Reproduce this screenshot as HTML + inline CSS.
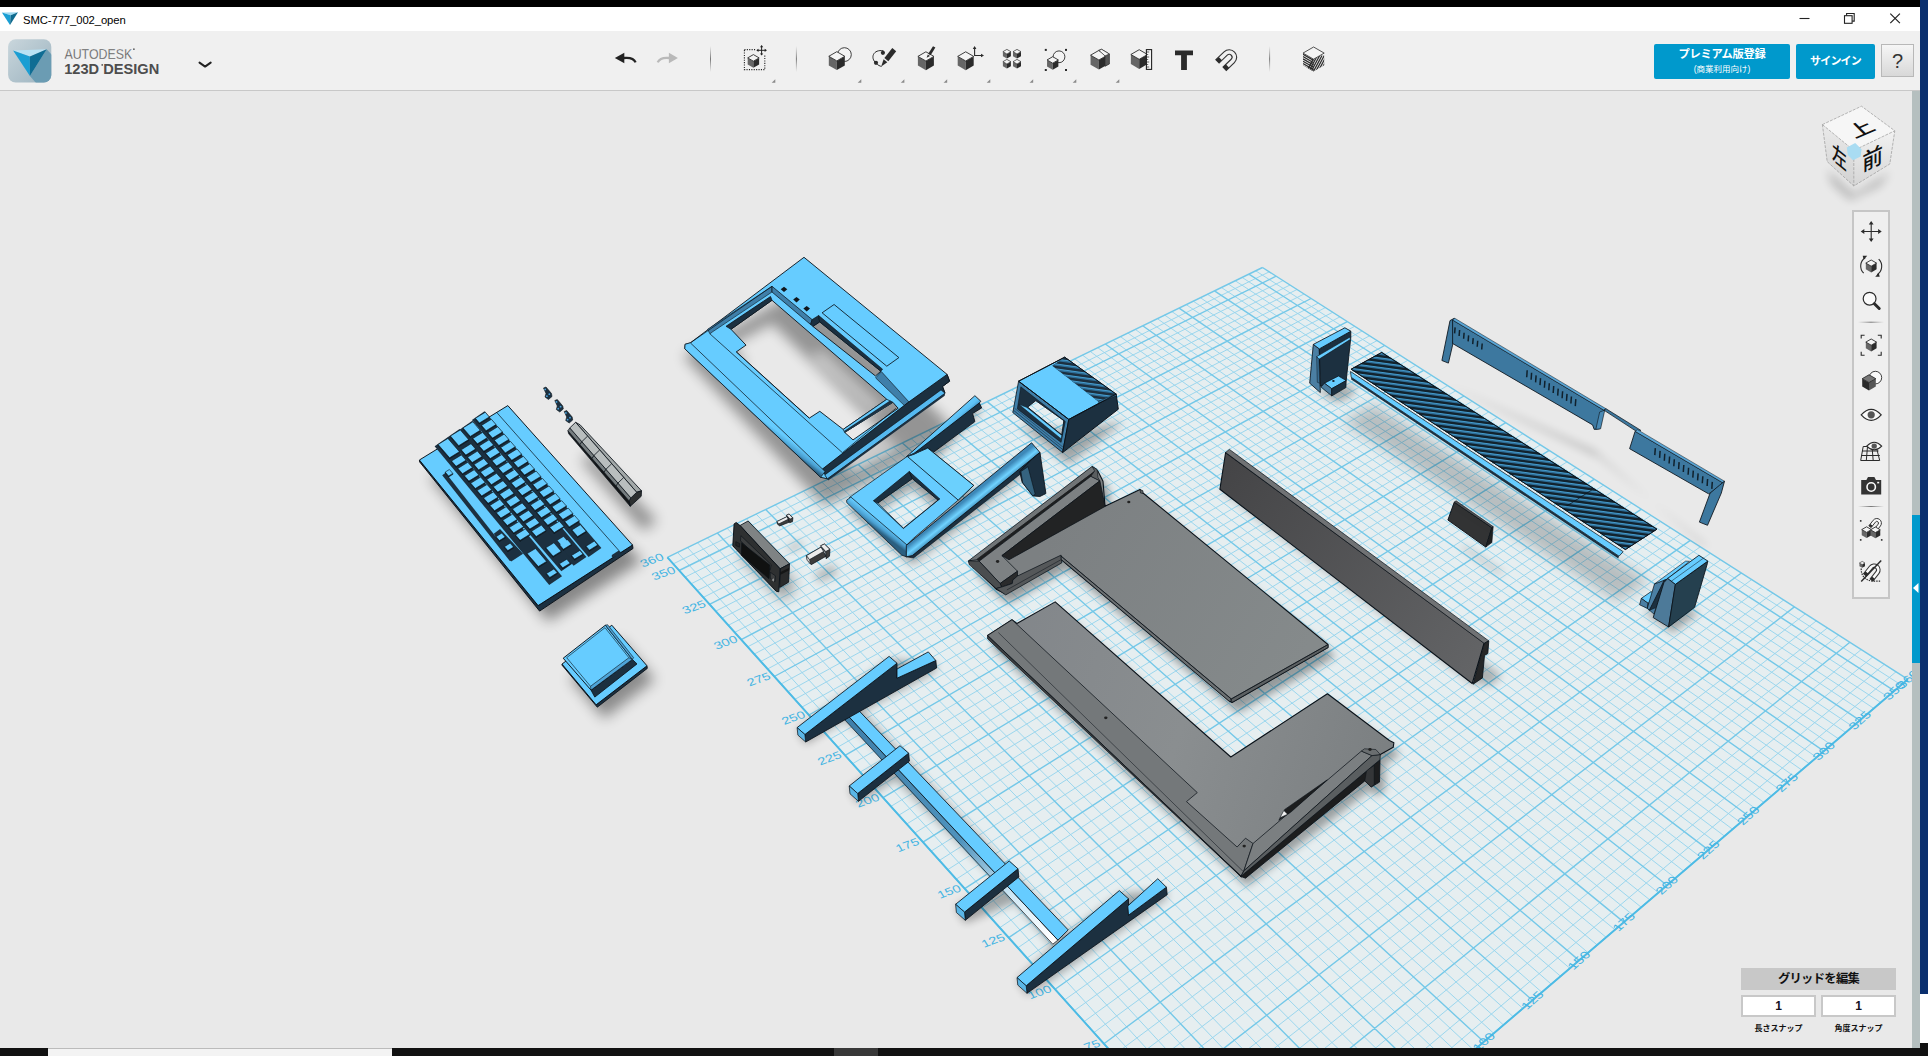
<!DOCTYPE html>
<html><head><meta charset="utf-8"><title>SMC-777_002_open</title>
<style>
html,body{margin:0;padding:0;}
body{width:1928px;height:1056px;overflow:hidden;position:relative;background:#e9e9e9;font-family:"Liberation Sans","Noto Sans CJK JP",sans-serif;}
.abs{position:absolute;}
#topblack{left:0;top:0;width:1920px;height:7.5px;background:#000;}
#titlebar{left:0;top:7px;width:1920px;height:24px;background:#fff;}
#title{left:23px;top:12.6px;font-size:11.3px;color:#000;line-height:14px;letter-spacing:-0.1px;}
#toolbar{left:0;top:31px;width:1920px;height:59px;background:#f0f0f0;border-bottom:1px solid #c8c8c8;}
#viewport{left:0;top:91px;width:1912px;height:957px;background:#e9e9e9;overflow:hidden;}
#rightblue{left:1920px;top:0;width:8px;height:994px;background:#0a2f6e;}
#rightwhite{left:1920px;top:994px;width:8px;height:49px;background:#fff;}
#vscroll{left:1912px;top:91px;width:8px;height:957px;background:#b5bfbf;}
#vthumb{left:1912px;top:515px;width:8px;height:148px;background:#0099cc;}
#bottom{left:0;top:1048px;width:1928px;height:8px;background:#111;}
#bottom2{left:1920px;top:1043px;width:8px;height:6px;background:#111;}
#bottombox{left:48px;top:1048px;width:344px;height:8px;background:#f3f3f3;border-top:1px solid #bbb;box-sizing:border-box;}
#bottomtab{left:834px;top:1048px;width:44px;height:8px;background:#383838;}
.btn{background:#0099cc;color:#fff;text-align:center;border-radius:2px;font-weight:bold;}
#prem{left:1654px;top:44px;width:136px;height:35px;}
#prem .l1{position:absolute;left:0;width:136px;top:3px;font-size:11.3px;line-height:14px;letter-spacing:-0.3px;}
#prem .l2{position:absolute;left:0;width:136px;top:19px;font-size:8.5px;line-height:12px;font-weight:normal;}
#signin{left:1796px;top:44px;width:79px;height:35px;font-size:11px;line-height:35px;letter-spacing:-0.8px;}
#help{left:1881px;top:44px;width:33px;height:33px;border:1px solid #b8b8b8;background:linear-gradient(#f6f6f6,#d8d8d8);font-size:20px;line-height:33px;text-align:center;color:#333;box-sizing:border-box;}
#navbar{left:1852px;top:210px;width:38px;height:389px;box-sizing:border-box;border:2.5px solid #c6c6c6;background:#efefef;}
#gridedit{left:1741px;top:968px;width:155px;height:22px;background:#c8c8c8;letter-spacing:-0.7px;font-size:12.3px;font-weight:bold;text-align:center;line-height:22px;color:#111;}
.snap{top:995px;width:75px;height:22px;box-sizing:border-box;border:2px solid #c8c8c8;background:#fff;text-align:center;font-size:12px;line-height:18px;color:#112;font-weight:bold;}
.snaplab{top:1024px;width:75px;font-size:8px;font-weight:bold;text-align:center;line-height:10px;color:#111;}
</style></head><body>
<div class="abs" id="viewport"></div>
<svg class="abs" style="left:0;top:0" width="1928" height="1056" viewBox="0 0 1928 1056">
<defs>
<filter id="sh" x="-30%" y="-30%" width="160%" height="160%"><feGaussianBlur stdDeviation="7"/></filter>
<filter id="sh2" x="-30%" y="-30%" width="160%" height="160%"><feGaussianBlur stdDeviation="4"/></filter>
<filter id="sh3" x="-30%" y="-30%" width="160%" height="160%"><feGaussianBlur stdDeviation="5"/></filter>
<filter id="sh4" x="-30%" y="-30%" width="160%" height="160%"><feGaussianBlur stdDeviation="6.5"/></filter>
<clipPath id="vp"><rect x="0" y="91" width="1912" height="957"/></clipPath>
<linearGradient id="gA" gradientUnits="userSpaceOnUse" x1="1060" y1="520" x2="1300" y2="660"><stop offset="0" stop-color="#7c8082"/><stop offset="1" stop-color="#858a8b"/></linearGradient>
<linearGradient id="gB" gradientUnits="userSpaceOnUse" x1="1000" y1="640" x2="1380" y2="760"><stop offset="0" stop-color="#82868a"/><stop offset="0.5" stop-color="#8a8e90"/><stop offset="1" stop-color="#7c8082"/></linearGradient>
<linearGradient id="gBP" gradientUnits="userSpaceOnUse" x1="1225" y1="470" x2="1480" y2="660"><stop offset="0" stop-color="#454547"/><stop offset="1" stop-color="#636466"/></linearGradient>
<linearGradient id="gOpen" gradientUnits="userSpaceOnUse" x1="760" y1="400" x2="830" y2="345"><stop offset="0" stop-color="#e9e9e9"/><stop offset="0.55" stop-color="#b5b5b5"/><stop offset="1" stop-color="#9c9c9c"/></linearGradient>
<linearGradient id="gRound" gradientUnits="userSpaceOnUse" x1="750" y1="410" x2="744" y2="418"><stop offset="0" stop-color="#66ccff"/><stop offset="0.6" stop-color="#4a9fd0"/><stop offset="1" stop-color="#2b5f80"/></linearGradient>
<linearGradient id="gRound2" gradientUnits="userSpaceOnUse" x1="880" y1="520" x2="874" y2="528"><stop offset="0" stop-color="#66ccff"/><stop offset="0.6" stop-color="#4a9fd0"/><stop offset="1" stop-color="#2b5f80"/></linearGradient>
<linearGradient id="gRail" gradientUnits="userSpaceOnUse" x1="968" y1="498" x2="976" y2="508"><stop offset="0" stop-color="#3d88b8"/><stop offset="0.45" stop-color="#6fd2ff"/><stop offset="1" stop-color="#2f74a0"/></linearGradient>
<linearGradient id="gArm" gradientUnits="userSpaceOnUse" x1="940" y1="425" x2="946" y2="432"><stop offset="0" stop-color="#66ccff"/><stop offset="0.6" stop-color="#5cc0f4"/><stop offset="1" stop-color="#3f94c6"/></linearGradient>
<linearGradient id="gBarSide" gradientUnits="userSpaceOnUse" x1="850" y1="720" x2="1050" y2="940"><stop offset="0" stop-color="#3f7fa9"/><stop offset="0.55" stop-color="#4f93bd"/><stop offset="0.8" stop-color="#cfe8f5"/><stop offset="1" stop-color="#ffffff"/></linearGradient>
</defs>
<g clip-path="url(#vp)">
<polygon points="1267.9,1226.4 667.4,557.4 1262.5,267.5 1907.9,679.3" fill="#e6eef0" />
<path d="M1256 1213.2L1896.1 671.7M1279.6 1216.3L677.5 552.4M1244.3 1200.2L1884.4 664.3M1291.2 1206.4L687.5 547.5M1232.8 1187.3L1872.8 656.9M1302.7 1196.6L697.5 542.7M1221.3 1174.6L1861.3 649.5M1314.1 1186.8L707.4 537.8M1198.9 1149.5L1838.6 635.1M1336.6 1167.6L727.1 528.3M1187.9 1137.2L1827.4 627.9M1347.7 1158.1L736.8 523.5M1177 1125.1L1816.4 620.8M1358.7 1148.7L746.5 518.8M1166.2 1113.1L1805.4 613.8M1369.7 1139.3L756.1 514.1M1145 1089.4L1783.6 600M1391.2 1120.9L775.2 504.8M1134.5 1077.8L1772.9 593.1M1401.9 1111.8L784.6 500.2M1124.2 1066.3L1762.3 586.3M1412.4 1102.8L794 495.7M1114 1055L1751.7 579.6M1422.9 1093.9L803.3 491.1M1093.9 1032.6L1730.9 566.3M1443.5 1076.2L821.8 482.1M1084.1 1021.6L1720.6 559.8M1453.7 1067.5L831 477.6M1074.3 1010.7L1710.4 553.3M1463.9 1058.8L840.1 473.2M1064.6 999.9L1700.3 546.8M1473.9 1050.3L849.2 468.8M1045.6 978.8L1680.4 534.1M1493.7 1033.3L867.1 460.1M1036.2 968.3L1670.5 527.8M1503.5 1025L876 455.7M1027 958L1660.7 521.5M1513.2 1016.7L884.9 451.4M1017.8 947.8L1651 515.4M1522.8 1008.4L893.6 447.1M999.7 927.7L1631.8 503.1M1541.8 992.2L911.1 438.6M990.9 917.8L1622.4 497.1M1551.2 984.1L919.7 434.4M982.1 908L1613 491.1M1560.5 976.2L928.3 430.3M973.4 898.3L1603.6 485.1M1569.8 968.3L936.8 426.1M956.2 879.2L1585.2 473.4M1588.1 952.7L953.8 417.9M947.7 869.7L1576.1 467.6M1597.1 944.9L962.2 413.8M939.4 860.4L1567.1 461.8M1606.1 937.3L970.5 409.7M931.1 851.2L1558.1 456.1M1614.9 929.7L978.8 405.7M914.8 833L1540.4 444.8M1632.5 914.7L995.3 397.6M906.7 824L1531.6 439.2M1641.2 907.2L1003.4 393.7M898.8 815.2L1522.9 433.7M1649.8 899.9L1011.5 389.7M890.9 806.4L1514.3 428.2M1658.4 892.6L1019.6 385.8M875.3 789.1L1497.3 417.3M1675.3 878.1L1035.6 378M867.7 780.5L1488.8 411.9M1683.6 871L1043.5 374.1M860.1 772.1L1480.5 406.6M1691.9 863.9L1051.4 370.3M852.6 763.7L1472.2 401.3M1700.2 856.8L1059.2 366.5M837.7 747.2L1455.7 390.8M1716.4 842.9L1074.8 358.9M830.4 739L1447.6 385.6M1724.5 836.1L1082.5 355.1M823.2 730.9L1439.6 380.5M1732.5 829.2L1090.2 351.4M816 722.9L1431.5 375.4M1740.4 822.4L1097.8 347.7M801.8 707.2L1415.7 365.3M1756.1 809L1113 340.3M794.8 699.4L1407.9 360.3M1763.8 802.4L1120.5 336.7M787.9 691.7L1400.1 355.3M1771.5 795.8L1127.9 333M781.1 684L1392.4 350.4M1779.2 789.3L1135.3 329.4M767.5 669L1377.1 340.6M1794.3 776.4L1150.1 322.2M760.8 661.5L1369.6 335.8M1801.8 770L1157.4 318.7M754.2 654.1L1362.1 331M1809.2 763.6L1164.7 315.1M747.7 646.8L1354.7 326.3M1816.6 757.3L1171.9 311.6M734.7 632.4L1339.9 316.9M1831.2 744.8L1186.2 304.6M728.3 625.3L1332.6 312.3M1838.4 738.7L1193.3 301.2M722 618.2L1325.4 307.6M1845.6 732.5L1200.4 297.7M715.7 611.2L1318.2 303.1M1852.7 726.5L1207.5 294.3M703.3 597.4L1304 294M1866.8 714.4L1221.4 287.5M697.2 590.6L1297 289.5M1873.8 708.4L1228.4 284.1M691.1 583.8L1290 285M1880.7 702.5L1235.3 280.8M685.1 577.1L1283 280.6M1887.6 696.7L1242.1 277.4M673.2 563.9L1269.3 271.8M1901.2 685L1255.7 270.8" stroke="#97d5ed" stroke-width="0.95" fill="none"/>
<path d="M1267.9 1226.4L1907.9 679.3M1267.9 1226.4L667.4 557.4M1210.1 1162L1849.9 642.3M1325.4 1177.2L717.3 533M1155.5 1101.2L1794.4 606.9M1380.5 1130.1L765.7 509.5M1103.9 1043.7L1741.3 573M1433.3 1085L812.6 486.6M1055.1 989.3L1690.3 540.4M1483.8 1041.8L858.2 464.4M1008.7 937.7L1641.4 509.2M1532.4 1000.3L902.4 442.9M964.7 888.7L1594.4 479.2M1579 960.4L945.3 422M922.9 842.1L1549.2 450.4M1623.8 922.1L987.1 401.6M883.1 797.7L1505.8 422.7M1666.9 885.3L1027.6 381.9M845.1 755.4L1463.9 396M1708.3 849.9L1067 362.7M808.9 715L1423.6 370.3M1748.3 815.7L1105.4 344M774.3 676.5L1384.7 345.5M1786.8 782.8L1142.7 325.8M741.2 639.6L1347.3 321.6M1823.9 751.1L1179.1 308.1M709.5 604.3L1311.1 298.5M1859.8 720.4L1214.5 290.9M679.1 570.5L1276.1 276.2M1894.4 690.8L1248.9 274.1M667.4 557.4L1262.5 267.5M1907.9 679.3L1262.5 267.5" stroke="#74c8e8" stroke-width="1.4" fill="none"/>
<path d="M667.4 557.4L1267.9 1226.4L1907.9 679.3" stroke="#4dbbe5" stroke-width="1.9" fill="none"/>
<text transform="matrix(0.94,-0.34,0.40,0.66,664.9,559.4)" x="0" y="0" text-anchor="end" font-size="14.2" fill="#45b5e3" font-family="Liberation Sans,sans-serif">360</text>
<text transform="matrix(0.94,-0.34,0.40,0.66,676.6,572.5)" x="0" y="0" text-anchor="end" font-size="14.2" fill="#45b5e3" font-family="Liberation Sans,sans-serif">350</text>
<text transform="matrix(0.94,-0.34,0.40,0.66,707,606.3)" x="0" y="0" text-anchor="end" font-size="14.2" fill="#45b5e3" font-family="Liberation Sans,sans-serif">325</text>
<text transform="matrix(0.94,-0.34,0.40,0.66,738.7,641.6)" x="0" y="0" text-anchor="end" font-size="14.2" fill="#45b5e3" font-family="Liberation Sans,sans-serif">300</text>
<text transform="matrix(0.94,-0.34,0.40,0.66,771.8,678.5)" x="0" y="0" text-anchor="end" font-size="14.2" fill="#45b5e3" font-family="Liberation Sans,sans-serif">275</text>
<text transform="matrix(0.94,-0.34,0.40,0.66,806.4,717)" x="0" y="0" text-anchor="end" font-size="14.2" fill="#45b5e3" font-family="Liberation Sans,sans-serif">250</text>
<text transform="matrix(0.94,-0.34,0.40,0.66,842.6,757.4)" x="0" y="0" text-anchor="end" font-size="14.2" fill="#45b5e3" font-family="Liberation Sans,sans-serif">225</text>
<text transform="matrix(0.94,-0.34,0.40,0.66,880.6,799.7)" x="0" y="0" text-anchor="end" font-size="14.2" fill="#45b5e3" font-family="Liberation Sans,sans-serif">200</text>
<text transform="matrix(0.94,-0.34,0.40,0.66,920.4,844.1)" x="0" y="0" text-anchor="end" font-size="14.2" fill="#45b5e3" font-family="Liberation Sans,sans-serif">175</text>
<text transform="matrix(0.94,-0.34,0.40,0.66,962.2,890.7)" x="0" y="0" text-anchor="end" font-size="14.2" fill="#45b5e3" font-family="Liberation Sans,sans-serif">150</text>
<text transform="matrix(0.94,-0.34,0.40,0.66,1006.2,939.7)" x="0" y="0" text-anchor="end" font-size="14.2" fill="#45b5e3" font-family="Liberation Sans,sans-serif">125</text>
<text transform="matrix(0.94,-0.34,0.40,0.66,1052.6,991.3)" x="0" y="0" text-anchor="end" font-size="14.2" fill="#45b5e3" font-family="Liberation Sans,sans-serif">100</text>
<text transform="matrix(0.94,-0.34,0.40,0.66,1101.4,1045.7)" x="0" y="0" text-anchor="end" font-size="14.2" fill="#45b5e3" font-family="Liberation Sans,sans-serif">75</text>
<text transform="matrix(0.75,-0.66,0.72,0.455,1907.9,679.3)" x="0" y="4.8" text-anchor="middle" font-size="14.2" fill="#45b5e3" font-family="Liberation Sans,sans-serif">360</text>
<text transform="matrix(0.75,-0.66,0.72,0.455,1894.4,690.8)" x="0" y="4.8" text-anchor="middle" font-size="14.2" fill="#45b5e3" font-family="Liberation Sans,sans-serif">350</text>
<text transform="matrix(0.75,-0.66,0.72,0.455,1859.8,720.4)" x="0" y="4.8" text-anchor="middle" font-size="14.2" fill="#45b5e3" font-family="Liberation Sans,sans-serif">325</text>
<text transform="matrix(0.75,-0.66,0.72,0.455,1823.9,751.1)" x="0" y="4.8" text-anchor="middle" font-size="14.2" fill="#45b5e3" font-family="Liberation Sans,sans-serif">300</text>
<text transform="matrix(0.75,-0.66,0.72,0.455,1786.8,782.8)" x="0" y="4.8" text-anchor="middle" font-size="14.2" fill="#45b5e3" font-family="Liberation Sans,sans-serif">275</text>
<text transform="matrix(0.75,-0.66,0.72,0.455,1748.3,815.7)" x="0" y="4.8" text-anchor="middle" font-size="14.2" fill="#45b5e3" font-family="Liberation Sans,sans-serif">250</text>
<text transform="matrix(0.75,-0.66,0.72,0.455,1708.3,849.9)" x="0" y="4.8" text-anchor="middle" font-size="14.2" fill="#45b5e3" font-family="Liberation Sans,sans-serif">225</text>
<text transform="matrix(0.75,-0.66,0.72,0.455,1666.9,885.3)" x="0" y="4.8" text-anchor="middle" font-size="14.2" fill="#45b5e3" font-family="Liberation Sans,sans-serif">200</text>
<text transform="matrix(0.75,-0.66,0.72,0.455,1623.8,922.1)" x="0" y="4.8" text-anchor="middle" font-size="14.2" fill="#45b5e3" font-family="Liberation Sans,sans-serif">175</text>
<text transform="matrix(0.75,-0.66,0.72,0.455,1579,960.4)" x="0" y="4.8" text-anchor="middle" font-size="14.2" fill="#45b5e3" font-family="Liberation Sans,sans-serif">150</text>
<text transform="matrix(0.75,-0.66,0.72,0.455,1532.4,1000.3)" x="0" y="4.8" text-anchor="middle" font-size="14.2" fill="#45b5e3" font-family="Liberation Sans,sans-serif">125</text>
<text transform="matrix(0.75,-0.66,0.72,0.455,1483.8,1041.8)" x="0" y="4.8" text-anchor="middle" font-size="14.2" fill="#45b5e3" font-family="Liberation Sans,sans-serif">100</text>
<polygon points="974.8,571.8 1098.5,477 1104,481.2 1109,491.2 1111,516.2 1146,499.5 1149,503 1334,654.5 1334,657.5 1238,712.5 1235.5,711 1067.2,569.5 1009.8,603 1002.2,599.2" fill="#000" opacity="0.35" filter="url(#sh2)"/>
<polygon points="968.8,561.8 1092.5,467 1098,471.2 1103,481.2 1105,506.2 1140,489.5 1143,493 1328,644.5 1328,647.5 1232,702.5 1229.5,701 1061.2,559.5 1003.8,593 996.2,589.2" fill="url(#gA)" stroke="#0a1118" stroke-width="1.08" stroke-linejoin="round" />
<polygon points="968.5,560.8 1092.1,466.4 1097.1,469.6 976.3,559.8" fill="#707476" stroke="#0a1118" stroke-width="0.72" stroke-linejoin="round" />
<polygon points="976.3,559.8 1094.6,470.9 1091.4,476.3 979.2,561.2" fill="#1e1f20" />
<polygon points="979.2,561.2 1090.9,476.3 1099.9,480.8 1001.9,555.6 1017.5,571.2 1000.1,583.5" fill="#7d8183" stroke="#0a1118" stroke-width="0.72" stroke-linejoin="round" />
<polygon points="1001.9,555.6 1099.9,480.8 1105.1,506.4 1009,559.8" fill="#222324" stroke="#0a1118" stroke-width="0.72" stroke-linejoin="round" />
<polygon points="1092.1,466.4 1097.1,469.6 1098,477.7 1099.9,480.8 1090.9,476.3 1094.6,470.9" fill="#5a5e60" stroke="#0a1118" stroke-width="0.6" stroke-linejoin="round" />
<polygon points="1000.1,583.5 1017.5,571.2 1017.5,576 1012.8,580 1012.3,583.5 1001.5,587.1" fill="#2a2b2c" stroke="#0a1118" stroke-width="0.72" stroke-linejoin="round" />
<polygon points="968.5,560.8 979.2,561.2 1000.1,583.5 1001.5,587.1 996.2,588.5 969.2,564.6" fill="#4a4d4f" stroke="#0a1118" stroke-width="0.72" stroke-linejoin="round" />
<ellipse cx="997.6" cy="561.5" rx="1.7" ry="1.4" fill="#222"/>
<polygon points="1017.5,576 1061.1,555.1 1061.7,562.9 1005.7,594.9 996.2,588.5 1001.5,587.1 1012.3,583.5 1012.8,580" fill="#55585a" stroke="#0a1118" stroke-width="0.72" stroke-linejoin="round" />
<polyline points="1006.9,589.9 1061.5,559.4" fill="none" stroke="#0a1118" stroke-width="0.5" stroke-linejoin="round" />
<polygon points="1061.2,556.2 1231.2,698.8 1229.5,701.5 1061.2,559.5" fill="#6c7072" stroke="#0a1118" stroke-width="0.72" stroke-linejoin="round" />
<polygon points="1328,644.5 1328,647.5 1232,702.5 1231.2,699" fill="#5c6062" stroke="#0a1118" stroke-width="0.72" stroke-linejoin="round" />
<polyline points="1061.2,556.2 1231.2,699 1328,644.5" fill="none" stroke="#0a1118" stroke-width="0.6" stroke-linejoin="round" />
<ellipse cx="1128.8" cy="502" rx="1.6" ry="1.3" fill="#222"/>
<polygon points="1140,489.5 1143,490.8 1143,493.5 1140.5,493" fill="#5c6062" stroke="#0a1118" stroke-width="0.6" stroke-linejoin="round" />
<polygon points="1219.9,489.3 1472.2,683.5 1491.4,685.6 1501.6,675.4 1251.1,481.1" fill="#000" opacity="0.25" filter="url(#sh2)"/>
<polygon points="1225.6,452.5 1219.9,489.3 1472.2,683.5 1484.2,642.7" fill="url(#gBP)" stroke="#0a1118" stroke-width="1.08" stroke-linejoin="round" />
<polygon points="1225.6,452.5 1229.4,449.4 1488.8,640.9 1484.2,643.4" fill="#707274" stroke="#0a1118" stroke-width="0.72" stroke-linejoin="round" />
<polygon points="1484.2,643.4 1488.8,640.9 1487.8,653.6 1484.5,655.4 1482.4,677.9 1473,684.3" fill="#262728" stroke="#0a1118" stroke-width="0.84" stroke-linejoin="round" />
<polygon points="1457.9,545 1495.8,572.1 1506.5,575.1 1468.1,548.3" fill="#000" opacity="0.25" filter="url(#sh2)"/>
<polygon points="1454.3,502.1 1447.9,520 1485.8,547.1 1491.9,527.6" fill="#323334" stroke="#0a1118" stroke-width="0.96" stroke-linejoin="round" />
<polygon points="1454.3,502.1 1456.1,500.8 1493.2,526.6 1491.9,527.6" fill="#555759" stroke="#0a1118" stroke-width="0.6" stroke-linejoin="round" />
<polygon points="1491.9,527.6 1493.2,526.6 1491.9,542.5 1485.8,547.1" fill="#1f2021" stroke="#0a1118" stroke-width="0.6" stroke-linejoin="round" />
<polygon points="992.6,644.5 1017,628.8 1021.9,632.5 1060.2,610.9 1235.8,766 1332.4,702.7 1394.4,749.5 1398.9,751.7 1398.2,756.3 1385.3,763.5 1384.5,791.1 1376.2,796 1369.8,789.9 1246.7,886.3 992.6,647.9" fill="#000" opacity="0.33" filter="url(#sh2)"/>
<polygon points="1240.2,876.1 1380,759.7 1379.5,782.1 1371.2,787 1364.8,780.9 1245.5,878.2" fill="#1c1d1e" stroke="#0a1118" stroke-width="0.84" stroke-linejoin="round" />
<polygon points="1366.7,770 1374.2,765.5 1374.2,784.4 1371.2,787 1364.8,780.9" fill="#343638" stroke="#0a1118" stroke-width="0.48" stroke-linejoin="round" />
<polygon points="987.6,635.5 1012,619.8 1016.9,623.5 1055.2,601.9 1230.8,757 1327.4,693.7 1389.4,740.5 1393.9,742.7 1393.2,747.3 1380.3,754.5 1240.9,876.1" fill="url(#gB)" stroke="#0a1118" stroke-width="1.08" stroke-linejoin="round" />
<polygon points="987.6,635.5 1012,619.8 1197.3,792.6 1186.5,801.6 1237.1,847 1245.5,838.2 1253,843.5 1243.9,870.8 1240.9,876.1" fill="#74787a" stroke="#0a1118" stroke-width="0.72" stroke-linejoin="round" />
<polyline points="998.4,632.6 1243.2,871.5" fill="none" stroke="#0a1118" stroke-width="0.5" stroke-linejoin="round" />
<polygon points="1253,843.5 1361.4,751.1 1372,755.6 1243.9,870.8" fill="#7b7f81" stroke="#0a1118" stroke-width="0.72" stroke-linejoin="round" />
<polygon points="1243.9,870.8 1372,755.6 1380.3,754.5 1380,759.7 1240.9,876.4" fill="#5a5e60" stroke="#0a1118" stroke-width="0.72" stroke-linejoin="round" />
<polygon points="1361.4,751.1 1364.4,748.8 1375.8,749.5 1380.3,754.5 1372,755.6" fill="#6a6e70" stroke="#0a1118" stroke-width="0.6" stroke-linejoin="round" />
<polygon points="1278.8,820.3 1284.8,809.4 1327.3,779.8 1290.9,812.1" fill="#1c1d1e" stroke="#0a1118" stroke-width="0.6" stroke-linejoin="round" />
<polygon points="1280,817.7 1283.8,810.6 1287.6,814.2" fill="#f2f2f2" stroke="#0a1118" stroke-width="0.48" stroke-linejoin="round" />
<polygon points="987.6,635.5 987.6,638.9 1241.7,877.3 1240.9,876.1" fill="#3c3e40" stroke="#0a1118" stroke-width="0.72" stroke-linejoin="round" />
<ellipse cx="1105.8" cy="717.8" rx="1.7" ry="1.4" fill="#222"/>
<ellipse cx="1244.2" cy="846.1" rx="1.7" ry="1.4" fill="#222"/>
<ellipse cx="1370" cy="749.5" rx="1.7" ry="1.4" fill="#222"/>
<path d="M685.1 353.4 L690.3 352.8 L804 286.6 L947.1 421.4 L949.6 428.3 L942.5 432.4 L945 439.3 L827.4 504.9 L820.6 502.4 L684.8 357.7Z M731 345.6 L772 323.5 L886.8 436.5 L843.2 459.3 L819.8 438.3 L809.3 443.3 L736.3 368.3 L746 363.2Z M812.9 355 L819.7 351.6 L880.8 408.4 L875.5 412.3Z M844.7 462.4 L892.9 440.4 L898.1 447 L853 471Z" fill="#000" fill-rule="evenodd" opacity="0.36" filter="url(#sh4)"/>
<path d="M685.1 344.3 L690.3 342.9 L804 257.3 L947.1 374.4 L949.6 381.2 L942.5 386.5 L945 393.2 L827.4 478.8 L820.6 477.3 L684.8 348.8Z M731 329.3 L772 300.3 L886.8 399.3 L843.2 429.4 L819.8 411.3 L809.3 418.1 L736.3 351.9 L746 345.1Z M812.9 326.4 L819.7 321.9 L880.8 371.2 L875.5 376Z M844.7 432.4 L892.9 402.3 L898.1 408.3 L853 439.9Z" fill="#66ccff" fill-rule="evenodd" stroke="#0a1118" stroke-width="0.9" stroke-linejoin="round" />
<polygon points="772,286.3 772,292 712.9,331.6 709.9,333.8 707.6,329.3" fill="#3f7fa9" stroke="#0a1118" stroke-width="0.6" stroke-linejoin="round" />
<polygon points="770.5,296.5 772,300.3 731,329.3 726,326.3" fill="#1c3040" stroke="#0a1118" stroke-width="0.72" stroke-linejoin="round" />
<polygon points="772,286.3 812.1,319.6 810.6,324.5 772,292" fill="#3f7fa9" stroke="#0a1118" stroke-width="0.72" stroke-linejoin="round" />
<polygon points="812.1,319.6 818.6,315.5 819.7,321.9 812.9,326.4 810.6,324.5" fill="#1c3040" stroke="#0a1118" stroke-width="0.6" stroke-linejoin="round" />
<polygon points="818.6,315.5 820.8,317.3 882.6,369.2 880.8,371.2 819.7,321.9" fill="#1c3040" stroke="#0a1118" stroke-width="0.6" stroke-linejoin="round" />
<polygon points="822.1,312.8 834.1,304.5 898.9,357.6 886.8,366.2" fill="#66ccff" stroke="#0a1118" stroke-width="0.84" stroke-linejoin="round" />
<polygon points="780.7,289.3 784,286.7 787.3,289.3 784,292.1" fill="#10161c" />
<polygon points="793.2,299.5 796.5,297 799.8,299.5 796.5,302.4" fill="#10161c" />
<polygon points="803.4,308.5 806.7,306 810,308.5 806.7,311.4" fill="#10161c" />
<polyline points="690.3,342.9 772,286.3" fill="none" stroke="#0a1118" stroke-width="0.7" stroke-linejoin="round" />
<polyline points="709.9,333.8 842.4,452.7 895.9,408.3" fill="none" stroke="#0a1118" stroke-width="0.7" stroke-linejoin="round" />
<polyline points="736.3,351.8 809.3,418.1" fill="none" stroke="#0a1118" stroke-width="0.6" stroke-linejoin="round" />
<polygon points="843.2,429.4 886.8,399.3 892.9,402.3 844.7,432.4" fill="#66ccff" stroke="#0a1118" stroke-width="0.72" stroke-linejoin="round" />
<polygon points="890.1,400.5 892.9,402.3 844.7,432.4 844.1,430.9" fill="#1c3040" />
<polygon points="875.6,377.9 881.4,371.6 909.1,402.1 904.5,405.6" fill="#3f7fa9" stroke="#0a1118" stroke-width="0.6" stroke-linejoin="round" />
<polygon points="947.1,374.4 949.6,381.2 942.5,386.5 945,393.2 827.4,478.8 822.1,469.3 907.9,402.6" fill="#1c3040" stroke="#0a1118" stroke-width="0.84" stroke-linejoin="round" />
<polygon points="941,389.9 945,393.2 827.4,478.8 824.8,474.9" fill="#55b9f0" stroke="#0a1118" stroke-width="0.6" stroke-linejoin="round" />
<polygon points="945,393.2 944.7,395.7 828.1,480.6 827.4,478.8" fill="#1c3040" />
<polygon points="685.1,344.3 690.3,342.8 825.1,471.5 820.6,477.3 684.8,348.8" fill="url(#gRound)" stroke="#0a1118" stroke-width="0.72" stroke-linejoin="round" />
<path d="M846.7 509.1 L907.5 465.2 L974.9 405 L980.9 410.3 L933.8 461 L973.7 494.4 L1031.6 451.8 L1039.9 461.4 L912.3 564.6Z M877.7 512.1 L912.3 487.6 L938 509.1 L903.4 537.1Z" fill="#000" fill-rule="evenodd" opacity="0.33" filter="url(#sh3)"/>
<polygon points="912.3,453.8 979.1,402.5 981.7,407.9 972.6,413.5 974.9,421.6 933.8,452 927.8,448.1" fill="#1c3040" stroke="#0a1118" stroke-width="0.84" stroke-linejoin="round" />
<polygon points="906.3,456.8 974.9,395.7 980.9,401.3 979.1,403.1 913.5,453.8" fill="url(#gArm)" stroke="#0a1118" stroke-width="0.84" stroke-linejoin="round" />
<path d="M849.1 497.7 L907.5 456.2 L927.8 448.1 L973.7 485.4 L958.2 500.1 L913.5 538.3 L906.3 545.4Z M877.7 503.1 L912.3 478.6 L938 500.1 L903.4 528.1Z" fill="#66ccff" fill-rule="evenodd" stroke="#0a1118" stroke-width="0.7" stroke-linejoin="round" />
<polygon points="873.5,500.7 909.3,471.5 912.3,478.6 877.7,503.1" fill="#1c3040" stroke="#0a1118" stroke-width="0.72" stroke-linejoin="round" />
<polygon points="909.3,471.5 939.7,498.9 938,500.1 912.3,478.6" fill="#1c3040" stroke="#0a1118" stroke-width="0.72" stroke-linejoin="round" />
<polyline points="873.5,500.7 903.4,528.5 939.7,498.9" fill="none" stroke="#0a1118" stroke-width="0.7" stroke-linejoin="round" />
<polygon points="846.7,500.1 850.9,497.1 907.5,545.4 906.3,556.8 901.6,555 846.7,502.5" fill="url(#gRound2)" stroke="#0a1118" stroke-width="0.72" stroke-linejoin="round" />
<polygon points="907.5,456.6 927.8,448.1 973.7,485.4 958.2,500.1" fill="#6bd0fd" stroke="#0a1118" stroke-width="0.84" stroke-linejoin="round" />
<polygon points="907.5,456.6 912.3,453.8 927.8,448.1 913.5,455" fill="#1c3040" />
<polygon points="912.3,555.6 1039.9,452.4 1039.9,457.2 1032.8,464.3 913.5,558 906.3,556.8" fill="#1c3040" stroke="#0a1118" stroke-width="0.6" stroke-linejoin="round" />
<polygon points="906.3,545.4 1031.6,442.8 1039.9,452.4 912.3,555.6 906.3,556.8" fill="url(#gRail)" stroke="#0a1118" stroke-width="0.84" stroke-linejoin="round" />
<polygon points="1032.8,458.4 1039.9,452.4 1045.9,493.5 1039.9,496.5 1032.8,495.9 1022.1,482.2 1019.7,471.5" fill="#1c3040" stroke="#0a1118" stroke-width="0.84" stroke-linejoin="round" />
<polygon points="1020.9,471.5 1028,466.7 1035.2,494.1 1032.8,495.9 1022.7,482.8" fill="#35637f" stroke="#0a1118" stroke-width="0.6" stroke-linejoin="round" />
<polygon points="1018.8,424.6 1074.8,431.4 1124,420.9 1068.6,464.6" fill="#000" opacity="0.3" filter="url(#sh3)"/>
<path d="M1018.6 381.2 L1068.8 419.4 L1062.6 452.6 L1012.8 412.6Z M1027.5 407.1 L1035.8 400.6 L1063.9 420.6 L1061.8 435Z" fill="#3f7fa9" fill-rule="evenodd" stroke="#0a1118" stroke-width="0.8" stroke-linejoin="round" />
<path d="M1020.8 386.8 L1065.3 421.5 L1061.1 442.4 L1017.3 408.9Z M1027.5 407.1 L1035.8 400.6 L1063.9 420.6 L1061.8 435Z" fill="#1c3040" fill-rule="evenodd" stroke="#0a1118" stroke-width="0.5" stroke-linejoin="round" />
<polygon points="1018.9,404.3 1026.9,407.5 1061.8,435.4 1061,438.7" fill="#66ccff" stroke="#0a1118" stroke-width="0.48" stroke-linejoin="round" />
<polyline points="1013.6,410.4 1062.9,449.6" fill="none" stroke="#0a1118" stroke-width="0.5" stroke-linejoin="round" />
<polyline points="1014.6,408.3 1063.2,447.3" fill="none" stroke="#0a1118" stroke-width="0.4" stroke-linejoin="round" />
<polygon points="1068.8,419.4 1116.2,394.2 1118.3,409.2 1062.6,452.6" fill="#1c3040" stroke="#0a1118" stroke-width="0.96" stroke-linejoin="round" />
<polygon points="1018.6,381.2 1064.7,357.2 1116.2,394.2 1068.8,419.4" fill="#66ccff" stroke="#0a1118" stroke-width="0.96" stroke-linejoin="round" />
<clipPath id="vbc"><polygon points="1052.2,365.8 1064.7,357.2 1116.2,394.2 1098.3,401.5"/></clipPath>
<polygon points="1052.2,365.8 1064.7,357.2 1116.2,394.2 1098.3,401.5" fill="#1c3040" />
<g clip-path="url(#vbc)"><line x1="1049.2" y1="349.2" x2="1119.2" y2="359" stroke="#2f6e97" stroke-width="2.0"/><line x1="1049.2" y1="348.3" x2="1119.2" y2="358.1" stroke="#4fb0e6" stroke-width="0.8"/><line x1="1049.2" y1="354.1" x2="1119.2" y2="363.9" stroke="#2f6e97" stroke-width="2.0"/><line x1="1049.2" y1="353.2" x2="1119.2" y2="363" stroke="#4fb0e6" stroke-width="0.8"/><line x1="1049.2" y1="359" x2="1119.2" y2="368.8" stroke="#2f6e97" stroke-width="2.0"/><line x1="1049.2" y1="358.1" x2="1119.2" y2="367.9" stroke="#4fb0e6" stroke-width="0.8"/><line x1="1049.2" y1="363.9" x2="1119.2" y2="373.7" stroke="#2f6e97" stroke-width="2.0"/><line x1="1049.2" y1="363" x2="1119.2" y2="372.8" stroke="#4fb0e6" stroke-width="0.8"/><line x1="1049.2" y1="368.8" x2="1119.2" y2="378.6" stroke="#2f6e97" stroke-width="2.0"/><line x1="1049.2" y1="367.9" x2="1119.2" y2="377.7" stroke="#4fb0e6" stroke-width="0.8"/><line x1="1049.2" y1="373.7" x2="1119.2" y2="383.5" stroke="#2f6e97" stroke-width="2.0"/><line x1="1049.2" y1="372.8" x2="1119.2" y2="382.6" stroke="#4fb0e6" stroke-width="0.8"/><line x1="1049.2" y1="378.6" x2="1119.2" y2="388.4" stroke="#2f6e97" stroke-width="2.0"/><line x1="1049.2" y1="377.7" x2="1119.2" y2="387.5" stroke="#4fb0e6" stroke-width="0.8"/><line x1="1049.2" y1="383.5" x2="1119.2" y2="393.3" stroke="#2f6e97" stroke-width="2.0"/><line x1="1049.2" y1="382.6" x2="1119.2" y2="392.4" stroke="#4fb0e6" stroke-width="0.8"/><line x1="1049.2" y1="388.4" x2="1119.2" y2="398.2" stroke="#2f6e97" stroke-width="2.0"/><line x1="1049.2" y1="387.5" x2="1119.2" y2="397.3" stroke="#4fb0e6" stroke-width="0.8"/><line x1="1049.2" y1="393.3" x2="1119.2" y2="403.1" stroke="#2f6e97" stroke-width="2.0"/><line x1="1049.2" y1="392.4" x2="1119.2" y2="402.2" stroke="#4fb0e6" stroke-width="0.8"/><line x1="1049.2" y1="398.2" x2="1119.2" y2="408" stroke="#2f6e97" stroke-width="2.0"/><line x1="1049.2" y1="397.3" x2="1119.2" y2="407.1" stroke="#4fb0e6" stroke-width="0.8"/><line x1="1049.2" y1="403.1" x2="1119.2" y2="412.9" stroke="#2f6e97" stroke-width="2.0"/><line x1="1049.2" y1="402.2" x2="1119.2" y2="412" stroke="#4fb0e6" stroke-width="0.8"/></g>
<polygon points="1098.3,401.5 1116.2,394.2 1116.5,395.6 1098.9,403" fill="#3f7fa9" stroke="#0a1118" stroke-width="0.48" stroke-linejoin="round" />
<polygon points="1018.6,381.2 1064.7,357.2 1116.2,394.2 1068.8,419.4" fill="none" stroke="#0a1118" stroke-width="0.96" stroke-linejoin="round" />
<path d="M797.1 730.6 L889.1 659.4 L935.8 663.5 L935.8 671 L861.8 711.2 L1068.2 933.5 L1121 893.6 L1166.4 890.2 L1167 898.1 L1049.4 981.3 L1027.2 995.3 L1017 980.6 L1052.8 946.5 L1015.3 902.2 L964.8 923.3 L955.6 907.3 L998.2 881.7 L895.9 779.4 L857.7 803.3 L849.2 789 L889.1 758.9 L844.8 719.7 L805.6 744.3Z" fill="#000" fill-rule="evenodd" opacity="0.3" filter="url(#sh2)"/>
<polygon points="844.8,712.3 1057.9,940.1 1052.8,944.2 844.1,719.1" fill="url(#gBarSide)" stroke="#0a1118" stroke-width="0.72" stroke-linejoin="round" />
<polygon points="844.8,712.3 854.3,705.8 1068.2,929.9 1057.9,940.1" fill="#66ccff" stroke="#0a1118" stroke-width="0.84" stroke-linejoin="round" />
<polygon points="804.9,734.5 897,663.2 897,678.2 935.8,660.5 936.6,668 805.7,742" fill="#1c3040" stroke="#0a1118" stroke-width="0.84" stroke-linejoin="round" />
<polygon points="897,669 928.3,651.9 935.8,660.5 897,678.2" fill="#66ccff" stroke="#0a1118" stroke-width="0.84" stroke-linejoin="round" />
<polygon points="797.1,727.6 889.1,656.4 897,663.2 804.9,734.5" fill="#66ccff" stroke="#0a1118" stroke-width="0.84" stroke-linejoin="round" />
<polygon points="797.1,727.6 804.9,734.5 805.7,742 797.9,735.1" fill="#5ab6e6" stroke="#0a1118" stroke-width="0.72" stroke-linejoin="round" />
<polygon points="857.7,793.5 908.6,753.2 909.4,761.1 858.5,801.3" fill="#1c3040" stroke="#0a1118" stroke-width="0.84" stroke-linejoin="round" />
<polygon points="849.2,786 900,745.7 908.6,753.2 857.7,793.5" fill="#66ccff" stroke="#0a1118" stroke-width="0.84" stroke-linejoin="round" />
<polygon points="849.2,786 857.7,793.5 858.5,801.3 850,793.8" fill="#5ab6e6" stroke="#0a1118" stroke-width="0.72" stroke-linejoin="round" />
<polygon points="964.5,912.1 1018,868.8 1018.8,877 965.3,920.3" fill="#1c3040" stroke="#0a1118" stroke-width="0.84" stroke-linejoin="round" />
<polygon points="955.6,904.3 1009.2,861 1018,868.8 964.5,912.1" fill="#66ccff" stroke="#0a1118" stroke-width="0.84" stroke-linejoin="round" />
<polygon points="955.6,904.3 964.5,912.1 965.3,920.3 956.4,912.5" fill="#5ab6e6" stroke="#0a1118" stroke-width="0.72" stroke-linejoin="round" />
<polygon points="1026.2,985.8 1128.5,898.8 1128.5,915.2 1166.4,887.2 1167.2,894.7 1027,993.3" fill="#1c3040" stroke="#0a1118" stroke-width="0.84" stroke-linejoin="round" />
<polygon points="1127.8,906 1157.8,878.7 1166.4,887.2 1128.5,915.2" fill="#66ccff" stroke="#0a1118" stroke-width="0.84" stroke-linejoin="round" />
<polygon points="1017,977.6 1119.3,890.6 1128.5,898.8 1026.2,985.8" fill="#66ccff" stroke="#0a1118" stroke-width="0.84" stroke-linejoin="round" />
<polygon points="1017,977.6 1026.2,985.8 1027,993.3 1017.8,985.1" fill="#5ab6e6" stroke="#0a1118" stroke-width="0.72" stroke-linejoin="round" />
<polygon points="1343.2,421.2 1373.7,404.5 1648.9,581.2 1617.4,601.5" fill="#000" opacity="0.2" filter="url(#sh)"/>
<polygon points="1350.5,371.5 1623.2,551.7 1619,556.2 1351.2,377.3" fill="#66ccff" stroke="#0a1118" stroke-width="0.72" stroke-linejoin="round" />
<polygon points="1351.2,377.3 1619,556.2 1618.3,558.5 1351.2,379.5" fill="#1c3040" />
<clipPath id="gc"><polygon points="1351.2,369.2 1381.7,352.5 1656.9,529.2 1625.4,549.5"/></clipPath>
<polygon points="1351.2,369.2 1381.7,352.5 1656.9,529.2 1625.4,549.5" fill="#12232e" stroke="#0a1118" stroke-width="0.96" stroke-linejoin="round" />
<g clip-path="url(#gc)"><line x1="1346.2" y1="292.5" x2="1661.9" y2="335.1" stroke="#2f6e97" stroke-width="1.9"/><line x1="1346.2" y1="291.6" x2="1661.9" y2="334.2" stroke="#4fb0e6" stroke-width="0.8"/><line x1="1346.2" y1="297.2" x2="1661.9" y2="339.8" stroke="#2f6e97" stroke-width="1.9"/><line x1="1346.2" y1="296.3" x2="1661.9" y2="338.9" stroke="#4fb0e6" stroke-width="0.8"/><line x1="1346.2" y1="302" x2="1661.9" y2="344.6" stroke="#2f6e97" stroke-width="1.9"/><line x1="1346.2" y1="301.1" x2="1661.9" y2="343.7" stroke="#4fb0e6" stroke-width="0.8"/><line x1="1346.2" y1="306.7" x2="1661.9" y2="349.3" stroke="#2f6e97" stroke-width="1.9"/><line x1="1346.2" y1="305.8" x2="1661.9" y2="348.4" stroke="#4fb0e6" stroke-width="0.8"/><line x1="1346.2" y1="311.5" x2="1661.9" y2="354.1" stroke="#2f6e97" stroke-width="1.9"/><line x1="1346.2" y1="310.6" x2="1661.9" y2="353.2" stroke="#4fb0e6" stroke-width="0.8"/><line x1="1346.2" y1="316.2" x2="1661.9" y2="358.8" stroke="#2f6e97" stroke-width="1.9"/><line x1="1346.2" y1="315.3" x2="1661.9" y2="357.9" stroke="#4fb0e6" stroke-width="0.8"/><line x1="1346.2" y1="321" x2="1661.9" y2="363.6" stroke="#2f6e97" stroke-width="1.9"/><line x1="1346.2" y1="320.1" x2="1661.9" y2="362.7" stroke="#4fb0e6" stroke-width="0.8"/><line x1="1346.2" y1="325.7" x2="1661.9" y2="368.3" stroke="#2f6e97" stroke-width="1.9"/><line x1="1346.2" y1="324.8" x2="1661.9" y2="367.4" stroke="#4fb0e6" stroke-width="0.8"/><line x1="1346.2" y1="330.5" x2="1661.9" y2="373.1" stroke="#2f6e97" stroke-width="1.9"/><line x1="1346.2" y1="329.6" x2="1661.9" y2="372.2" stroke="#4fb0e6" stroke-width="0.8"/><line x1="1346.2" y1="335.2" x2="1661.9" y2="377.8" stroke="#2f6e97" stroke-width="1.9"/><line x1="1346.2" y1="334.3" x2="1661.9" y2="376.9" stroke="#4fb0e6" stroke-width="0.8"/><line x1="1346.2" y1="340" x2="1661.9" y2="382.6" stroke="#2f6e97" stroke-width="1.9"/><line x1="1346.2" y1="339.1" x2="1661.9" y2="381.7" stroke="#4fb0e6" stroke-width="0.8"/><line x1="1346.2" y1="344.7" x2="1661.9" y2="387.3" stroke="#2f6e97" stroke-width="1.9"/><line x1="1346.2" y1="343.8" x2="1661.9" y2="386.4" stroke="#4fb0e6" stroke-width="0.8"/><line x1="1346.2" y1="349.5" x2="1661.9" y2="392.1" stroke="#2f6e97" stroke-width="1.9"/><line x1="1346.2" y1="348.6" x2="1661.9" y2="391.2" stroke="#4fb0e6" stroke-width="0.8"/><line x1="1346.2" y1="354.2" x2="1661.9" y2="396.8" stroke="#2f6e97" stroke-width="1.9"/><line x1="1346.2" y1="353.3" x2="1661.9" y2="395.9" stroke="#4fb0e6" stroke-width="0.8"/><line x1="1346.2" y1="359" x2="1661.9" y2="401.6" stroke="#2f6e97" stroke-width="1.9"/><line x1="1346.2" y1="358.1" x2="1661.9" y2="400.7" stroke="#4fb0e6" stroke-width="0.8"/><line x1="1346.2" y1="363.7" x2="1661.9" y2="406.3" stroke="#2f6e97" stroke-width="1.9"/><line x1="1346.2" y1="362.8" x2="1661.9" y2="405.4" stroke="#4fb0e6" stroke-width="0.8"/><line x1="1346.2" y1="368.5" x2="1661.9" y2="411.1" stroke="#2f6e97" stroke-width="1.9"/><line x1="1346.2" y1="367.6" x2="1661.9" y2="410.2" stroke="#4fb0e6" stroke-width="0.8"/><line x1="1346.2" y1="373.2" x2="1661.9" y2="415.8" stroke="#2f6e97" stroke-width="1.9"/><line x1="1346.2" y1="372.3" x2="1661.9" y2="414.9" stroke="#4fb0e6" stroke-width="0.8"/><line x1="1346.2" y1="378" x2="1661.9" y2="420.6" stroke="#2f6e97" stroke-width="1.9"/><line x1="1346.2" y1="377.1" x2="1661.9" y2="419.7" stroke="#4fb0e6" stroke-width="0.8"/><line x1="1346.2" y1="382.7" x2="1661.9" y2="425.3" stroke="#2f6e97" stroke-width="1.9"/><line x1="1346.2" y1="381.8" x2="1661.9" y2="424.4" stroke="#4fb0e6" stroke-width="0.8"/><line x1="1346.2" y1="387.5" x2="1661.9" y2="430.1" stroke="#2f6e97" stroke-width="1.9"/><line x1="1346.2" y1="386.6" x2="1661.9" y2="429.2" stroke="#4fb0e6" stroke-width="0.8"/><line x1="1346.2" y1="392.2" x2="1661.9" y2="434.8" stroke="#2f6e97" stroke-width="1.9"/><line x1="1346.2" y1="391.3" x2="1661.9" y2="433.9" stroke="#4fb0e6" stroke-width="0.8"/><line x1="1346.2" y1="397" x2="1661.9" y2="439.6" stroke="#2f6e97" stroke-width="1.9"/><line x1="1346.2" y1="396.1" x2="1661.9" y2="438.7" stroke="#4fb0e6" stroke-width="0.8"/><line x1="1346.2" y1="401.7" x2="1661.9" y2="444.3" stroke="#2f6e97" stroke-width="1.9"/><line x1="1346.2" y1="400.8" x2="1661.9" y2="443.4" stroke="#4fb0e6" stroke-width="0.8"/><line x1="1346.2" y1="406.5" x2="1661.9" y2="449.1" stroke="#2f6e97" stroke-width="1.9"/><line x1="1346.2" y1="405.6" x2="1661.9" y2="448.2" stroke="#4fb0e6" stroke-width="0.8"/><line x1="1346.2" y1="411.2" x2="1661.9" y2="453.8" stroke="#2f6e97" stroke-width="1.9"/><line x1="1346.2" y1="410.3" x2="1661.9" y2="452.9" stroke="#4fb0e6" stroke-width="0.8"/><line x1="1346.2" y1="416" x2="1661.9" y2="458.6" stroke="#2f6e97" stroke-width="1.9"/><line x1="1346.2" y1="415.1" x2="1661.9" y2="457.7" stroke="#4fb0e6" stroke-width="0.8"/><line x1="1346.2" y1="420.7" x2="1661.9" y2="463.3" stroke="#2f6e97" stroke-width="1.9"/><line x1="1346.2" y1="419.8" x2="1661.9" y2="462.4" stroke="#4fb0e6" stroke-width="0.8"/><line x1="1346.2" y1="425.5" x2="1661.9" y2="468.1" stroke="#2f6e97" stroke-width="1.9"/><line x1="1346.2" y1="424.6" x2="1661.9" y2="467.2" stroke="#4fb0e6" stroke-width="0.8"/><line x1="1346.2" y1="430.2" x2="1661.9" y2="472.8" stroke="#2f6e97" stroke-width="1.9"/><line x1="1346.2" y1="429.3" x2="1661.9" y2="471.9" stroke="#4fb0e6" stroke-width="0.8"/><line x1="1346.2" y1="435" x2="1661.9" y2="477.6" stroke="#2f6e97" stroke-width="1.9"/><line x1="1346.2" y1="434.1" x2="1661.9" y2="476.7" stroke="#4fb0e6" stroke-width="0.8"/><line x1="1346.2" y1="439.7" x2="1661.9" y2="482.3" stroke="#2f6e97" stroke-width="1.9"/><line x1="1346.2" y1="438.8" x2="1661.9" y2="481.4" stroke="#4fb0e6" stroke-width="0.8"/><line x1="1346.2" y1="444.5" x2="1661.9" y2="487.1" stroke="#2f6e97" stroke-width="1.9"/><line x1="1346.2" y1="443.6" x2="1661.9" y2="486.2" stroke="#4fb0e6" stroke-width="0.8"/><line x1="1346.2" y1="449.2" x2="1661.9" y2="491.8" stroke="#2f6e97" stroke-width="1.9"/><line x1="1346.2" y1="448.3" x2="1661.9" y2="490.9" stroke="#4fb0e6" stroke-width="0.8"/><line x1="1346.2" y1="454" x2="1661.9" y2="496.6" stroke="#2f6e97" stroke-width="1.9"/><line x1="1346.2" y1="453.1" x2="1661.9" y2="495.7" stroke="#4fb0e6" stroke-width="0.8"/><line x1="1346.2" y1="458.7" x2="1661.9" y2="501.3" stroke="#2f6e97" stroke-width="1.9"/><line x1="1346.2" y1="457.8" x2="1661.9" y2="500.4" stroke="#4fb0e6" stroke-width="0.8"/><line x1="1346.2" y1="463.5" x2="1661.9" y2="506.1" stroke="#2f6e97" stroke-width="1.9"/><line x1="1346.2" y1="462.6" x2="1661.9" y2="505.2" stroke="#4fb0e6" stroke-width="0.8"/><line x1="1346.2" y1="468.2" x2="1661.9" y2="510.8" stroke="#2f6e97" stroke-width="1.9"/><line x1="1346.2" y1="467.3" x2="1661.9" y2="509.9" stroke="#4fb0e6" stroke-width="0.8"/><line x1="1346.2" y1="473" x2="1661.9" y2="515.6" stroke="#2f6e97" stroke-width="1.9"/><line x1="1346.2" y1="472.1" x2="1661.9" y2="514.7" stroke="#4fb0e6" stroke-width="0.8"/><line x1="1346.2" y1="477.7" x2="1661.9" y2="520.3" stroke="#2f6e97" stroke-width="1.9"/><line x1="1346.2" y1="476.8" x2="1661.9" y2="519.4" stroke="#4fb0e6" stroke-width="0.8"/><line x1="1346.2" y1="482.5" x2="1661.9" y2="525.1" stroke="#2f6e97" stroke-width="1.9"/><line x1="1346.2" y1="481.6" x2="1661.9" y2="524.2" stroke="#4fb0e6" stroke-width="0.8"/><line x1="1346.2" y1="487.2" x2="1661.9" y2="529.8" stroke="#2f6e97" stroke-width="1.9"/><line x1="1346.2" y1="486.3" x2="1661.9" y2="528.9" stroke="#4fb0e6" stroke-width="0.8"/><line x1="1346.2" y1="492" x2="1661.9" y2="534.6" stroke="#2f6e97" stroke-width="1.9"/><line x1="1346.2" y1="491.1" x2="1661.9" y2="533.7" stroke="#4fb0e6" stroke-width="0.8"/><line x1="1346.2" y1="496.7" x2="1661.9" y2="539.3" stroke="#2f6e97" stroke-width="1.9"/><line x1="1346.2" y1="495.8" x2="1661.9" y2="538.4" stroke="#4fb0e6" stroke-width="0.8"/><line x1="1346.2" y1="501.5" x2="1661.9" y2="544.1" stroke="#2f6e97" stroke-width="1.9"/><line x1="1346.2" y1="500.6" x2="1661.9" y2="543.2" stroke="#4fb0e6" stroke-width="0.8"/><line x1="1346.2" y1="506.2" x2="1661.9" y2="548.8" stroke="#2f6e97" stroke-width="1.9"/><line x1="1346.2" y1="505.3" x2="1661.9" y2="547.9" stroke="#4fb0e6" stroke-width="0.8"/><line x1="1346.2" y1="511" x2="1661.9" y2="553.6" stroke="#2f6e97" stroke-width="1.9"/><line x1="1346.2" y1="510.1" x2="1661.9" y2="552.7" stroke="#4fb0e6" stroke-width="0.8"/><line x1="1346.2" y1="515.7" x2="1661.9" y2="558.3" stroke="#2f6e97" stroke-width="1.9"/><line x1="1346.2" y1="514.8" x2="1661.9" y2="557.4" stroke="#4fb0e6" stroke-width="0.8"/><line x1="1346.2" y1="520.5" x2="1661.9" y2="563.1" stroke="#2f6e97" stroke-width="1.9"/><line x1="1346.2" y1="519.6" x2="1661.9" y2="562.2" stroke="#4fb0e6" stroke-width="0.8"/><line x1="1346.2" y1="525.2" x2="1661.9" y2="567.8" stroke="#2f6e97" stroke-width="1.9"/><line x1="1346.2" y1="524.3" x2="1661.9" y2="566.9" stroke="#4fb0e6" stroke-width="0.8"/><line x1="1346.2" y1="530" x2="1661.9" y2="572.6" stroke="#2f6e97" stroke-width="1.9"/><line x1="1346.2" y1="529.1" x2="1661.9" y2="571.7" stroke="#4fb0e6" stroke-width="0.8"/><line x1="1346.2" y1="534.7" x2="1661.9" y2="577.3" stroke="#2f6e97" stroke-width="1.9"/><line x1="1346.2" y1="533.8" x2="1661.9" y2="576.4" stroke="#4fb0e6" stroke-width="0.8"/><line x1="1346.2" y1="539.5" x2="1661.9" y2="582.1" stroke="#2f6e97" stroke-width="1.9"/><line x1="1346.2" y1="538.6" x2="1661.9" y2="581.2" stroke="#4fb0e6" stroke-width="0.8"/><line x1="1346.2" y1="544.2" x2="1661.9" y2="586.8" stroke="#2f6e97" stroke-width="1.9"/><line x1="1346.2" y1="543.3" x2="1661.9" y2="585.9" stroke="#4fb0e6" stroke-width="0.8"/><line x1="1346.2" y1="549" x2="1661.9" y2="591.6" stroke="#2f6e97" stroke-width="1.9"/><line x1="1346.2" y1="548.1" x2="1661.9" y2="590.7" stroke="#4fb0e6" stroke-width="0.8"/><line x1="1346.2" y1="553.7" x2="1661.9" y2="596.3" stroke="#2f6e97" stroke-width="1.9"/><line x1="1346.2" y1="552.8" x2="1661.9" y2="595.4" stroke="#4fb0e6" stroke-width="0.8"/><line x1="1346.2" y1="558.5" x2="1661.9" y2="601.1" stroke="#2f6e97" stroke-width="1.9"/><line x1="1346.2" y1="557.6" x2="1661.9" y2="600.2" stroke="#4fb0e6" stroke-width="0.8"/></g>
<polyline points="1566.8,506 1591.9,489.9" fill="none" stroke="#0a1118" stroke-width="0.7" stroke-linejoin="round" />
<polygon points="1351.2,369.2 1381.7,352.5 1656.9,529.2 1625.4,549.5" fill="none" stroke="#0a1118" stroke-width="0.96" stroke-linejoin="round" />
<polygon points="1444.5,383.2 1594.2,450.8 1702,544.1 1708.5,547.3 1599,457.2" fill="#000" opacity="0.25" filter="url(#sh2)"/>
<polygon points="1450,320.6 1454.2,318.3 1457.4,321.2 1452.6,345.1 1448.4,363.1 1441.9,360.5" fill="#3d789f" stroke="#0a1118" stroke-width="0.84" stroke-linejoin="round" />
<polygon points="1452.6,320 1603.8,410.1 1599.7,428.8 1594.2,429.4 1592.6,424.9 1452.6,343.5" fill="#3d789f" stroke="#0a1118" stroke-width="0.84" stroke-linejoin="round" />
<polygon points="1452.6,320 1454.8,318.3 1606.1,408.8 1603.8,410.1" fill="#5aa6d6" stroke="#0a1118" stroke-width="0.48" stroke-linejoin="round" />
<polygon points="1599.7,412 1604.8,410.1 1600.6,428.8 1595.8,429.4" fill="#4a8ab5" stroke="#0a1118" stroke-width="0.6" stroke-linejoin="round" />
<polygon points="1603.8,410.1 1606.1,408.8 1640.9,430.4 1638.3,432.6" fill="#3d789f" stroke="#0a1118" stroke-width="0.72" stroke-linejoin="round" />
<polygon points="1635.1,431.3 1722.9,482.8 1719.7,488.3 1708.5,493.8 1629.6,448.7" fill="#3d789f" stroke="#0a1118" stroke-width="0.84" stroke-linejoin="round" />
<polygon points="1635.1,431.3 1637.6,429.7 1724.5,481.2 1722.9,482.8" fill="#5aa6d6" stroke="#0a1118" stroke-width="0.48" stroke-linejoin="round" />
<polygon points="1719.7,485.1 1724.5,481.2 1721.3,493.1 1707.5,525.3 1699.4,522.1 1710.1,493.1" fill="#3d789f" stroke="#0a1118" stroke-width="0.84" stroke-linejoin="round" />
<line x1="1455.1" y1="327.4" x2="1454.6" y2="333.4" stroke="#10202c" stroke-width="1.5"/>
<line x1="1459.6" y1="330" x2="1459.1" y2="336" stroke="#10202c" stroke-width="1.5"/>
<line x1="1464.1" y1="332.7" x2="1463.6" y2="338.7" stroke="#10202c" stroke-width="1.5"/>
<line x1="1468.6" y1="335.4" x2="1468.1" y2="341.4" stroke="#10202c" stroke-width="1.5"/>
<line x1="1473.2" y1="338.1" x2="1472.7" y2="344.1" stroke="#10202c" stroke-width="1.5"/>
<line x1="1477.7" y1="340.8" x2="1477.2" y2="346.8" stroke="#10202c" stroke-width="1.5"/>
<line x1="1482.2" y1="343.5" x2="1481.7" y2="349.5" stroke="#10202c" stroke-width="1.5"/>
<line x1="1527.2" y1="370.2" x2="1526.7" y2="377.2" stroke="#10202c" stroke-width="1.5"/>
<line x1="1531.6" y1="372.8" x2="1531.1" y2="379.8" stroke="#10202c" stroke-width="1.5"/>
<line x1="1536.1" y1="375.4" x2="1535.6" y2="382.4" stroke="#10202c" stroke-width="1.5"/>
<line x1="1540.5" y1="378.1" x2="1540" y2="385.1" stroke="#10202c" stroke-width="1.5"/>
<line x1="1544.9" y1="380.7" x2="1544.4" y2="387.7" stroke="#10202c" stroke-width="1.5"/>
<line x1="1549.3" y1="383.3" x2="1548.8" y2="390.3" stroke="#10202c" stroke-width="1.5"/>
<line x1="1553.7" y1="386" x2="1553.2" y2="393" stroke="#10202c" stroke-width="1.5"/>
<line x1="1558.2" y1="388.6" x2="1557.7" y2="395.6" stroke="#10202c" stroke-width="1.5"/>
<line x1="1562.6" y1="391.2" x2="1562.1" y2="398.2" stroke="#10202c" stroke-width="1.5"/>
<line x1="1567" y1="393.9" x2="1566.5" y2="400.9" stroke="#10202c" stroke-width="1.5"/>
<line x1="1571.4" y1="396.5" x2="1570.9" y2="403.5" stroke="#10202c" stroke-width="1.5"/>
<line x1="1575.8" y1="399.1" x2="1575.3" y2="406.1" stroke="#10202c" stroke-width="1.5"/>
<line x1="1655.3" y1="448.1" x2="1654.8" y2="455.1" stroke="#10202c" stroke-width="1.5"/>
<line x1="1660.1" y1="450.9" x2="1659.6" y2="457.9" stroke="#10202c" stroke-width="1.5"/>
<line x1="1664.8" y1="453.7" x2="1664.3" y2="460.7" stroke="#10202c" stroke-width="1.5"/>
<line x1="1669.6" y1="456.5" x2="1669.1" y2="463.5" stroke="#10202c" stroke-width="1.5"/>
<line x1="1674.3" y1="459.3" x2="1673.8" y2="466.3" stroke="#10202c" stroke-width="1.5"/>
<line x1="1679.1" y1="462.1" x2="1678.6" y2="469.1" stroke="#10202c" stroke-width="1.5"/>
<line x1="1683.8" y1="465" x2="1683.3" y2="472" stroke="#10202c" stroke-width="1.5"/>
<line x1="1688.6" y1="467.8" x2="1688.1" y2="474.8" stroke="#10202c" stroke-width="1.5"/>
<line x1="1693.3" y1="470.6" x2="1692.8" y2="477.6" stroke="#10202c" stroke-width="1.5"/>
<line x1="1698.1" y1="473.4" x2="1697.6" y2="480.4" stroke="#10202c" stroke-width="1.5"/>
<line x1="1702.8" y1="476.2" x2="1702.3" y2="483.2" stroke="#10202c" stroke-width="1.5"/>
<line x1="1707.6" y1="479" x2="1707.1" y2="486" stroke="#10202c" stroke-width="1.5"/>
<line x1="1712.3" y1="481.9" x2="1711.8" y2="488.9" stroke="#10202c" stroke-width="1.5"/>
<polygon points="1317.7,389.2 1328.6,398.2 1339.7,402 1354.2,393.5 1354.2,385.8" fill="#000" opacity="0.3" filter="url(#sh2)"/>
<polygon points="1313.3,344.4 1319.3,348.9 1320.3,392.6 1309.7,383.2" fill="#4b7fa3" stroke="#0a1118" stroke-width="0.84" stroke-linejoin="round" />
<polygon points="1319.3,348.9 1350.8,331.2 1350.8,337.6 1346.2,380.6 1320.4,386.2" fill="#1c3040" stroke="#0a1118" stroke-width="0.84" stroke-linejoin="round" />
<polygon points="1313.3,344.4 1344.9,327.8 1350.8,331.2 1319.3,348.9" fill="#66ccff" stroke="#0a1118" stroke-width="0.84" stroke-linejoin="round" />
<polygon points="1316.7,356.6 1349.6,337.3 1350.6,339.3 1318.9,359.3" fill="#66ccff" stroke="#0a1118" stroke-width="0.6" stroke-linejoin="round" />
<polygon points="1316.7,356.6 1318.9,359.3 1319.7,383.2 1317.3,382.3" fill="#3a6f94" stroke="#0a1118" stroke-width="0.48" stroke-linejoin="round" />
<polygon points="1324.4,383.2 1338.5,376 1346.2,380.6 1331.7,388.7" fill="#66ccff" stroke="#0a1118" stroke-width="0.72" stroke-linejoin="round" />
<polygon points="1321,387 1324.4,383.2 1331.7,388.7 1331.7,395.8" fill="#4b7fa3" stroke="#0a1118" stroke-width="0.72" stroke-linejoin="round" />
<polygon points="1331.7,388.7 1346.2,380.6 1345.9,387.6 1331.7,396" fill="#1c3040" stroke="#0a1118" stroke-width="0.72" stroke-linejoin="round" />
<ellipse cx="1333.4" cy="381.1" rx="1.3" ry="1" fill="#15222c"/>
<polygon points="1643.6,610.8 1672.6,633 1698.6,613.3 1683.7,605.7" fill="#000" opacity="0.3" filter="url(#sh2)"/>
<polygon points="1641.3,598.4 1651.1,591.6 1655.8,595.4 1648.1,603.3" fill="#66ccff" stroke="#0a1118" stroke-width="0.72" stroke-linejoin="round" />
<polygon points="1641.3,598.4 1648.1,603.3 1647.5,608.4 1639.6,604.8" fill="#4b7fa3" stroke="#0a1118" stroke-width="0.72" stroke-linejoin="round" />
<polygon points="1648.1,603.3 1655.8,608.2 1654.1,614.2 1647.5,608.4" fill="#4b7fa3" stroke="#0a1118" stroke-width="0.6" stroke-linejoin="round" />
<polygon points="1654.5,583.9 1664.3,580.1 1660.9,587.7 1649.4,610.3 1647.3,608.2" fill="#4b7fa3" stroke="#0a1118" stroke-width="0.72" stroke-linejoin="round" />
<polygon points="1654.5,583.9 1685.6,561.1 1689.5,561.3 1666.5,579.6 1664.3,580.1" fill="#66ccff" stroke="#0a1118" stroke-width="0.6" stroke-linejoin="round" />
<polygon points="1664.3,580.1 1667.7,578.8 1656.7,607.3 1649.4,610.3" fill="#1c3040" stroke="#0a1118" stroke-width="0.6" stroke-linejoin="round" />
<polygon points="1667.7,578.4 1675.4,584.3 1668.6,627 1653.2,617.6 1663.9,582.6" fill="#4d7a99" stroke="#0a1118" stroke-width="0.84" stroke-linejoin="round" />
<polygon points="1675.4,584.3 1707.8,561.1 1707.4,563.4 1694.6,607.3 1668.6,627" fill="#25404f" stroke="#0a1118" stroke-width="0.84" stroke-linejoin="round" />
<polygon points="1667.7,578.4 1698.9,555.3 1707.8,561.1 1675.4,584.3" fill="#66ccff" stroke="#0a1118" stroke-width="0.84" stroke-linejoin="round" />
<polyline points="1671.2,581.3 1703.5,558.1" fill="none" stroke="#0a1118" stroke-width="0.5" stroke-linejoin="round" />
<polygon points="429.4,476 530,456 642.5,561 548.1,621.6" fill="#000" opacity="0.42" filter="url(#sh)"/>
<polygon points="419.4,460 538.1,605.6 632.5,545 633,548.5 539.6,611.1 419.7,462" fill="#1c3040" stroke="#0a1118" stroke-width="0.96" stroke-linejoin="round" />
<polygon points="419.4,460 507.8,405.6 632.5,545 538.1,605.6" fill="#66ccff" stroke="#0a1118" stroke-width="0.96" stroke-linejoin="round" />
<polyline points="496.7,412.4 620.7,552.6" fill="none" stroke="#0a1118" stroke-width="0.7" stroke-linejoin="round" />
<polygon points="618.8,550.5 620.7,552.6 620.7,555.6 611.8,557.5 611.8,555" fill="#1c3040" />
<polygon points="484.6,411.2 601.4,548.1 588.6,557 471.9,420.1" fill="#1c3040" />
<polygon points="472.3,420.8 586.4,556.9 573.6,565.7 459.5,429.7" fill="#1c3040" />
<polygon points="459.6,428.9 574.1,562.4 561.3,571.2 446.9,437.8" fill="#1c3040" />
<polygon points="447.3,437.4 562,576.2 549.2,585.1 434.6,446.3" fill="#1c3040" />
<polygon points="475.4,418.3 479.4,423 479.4,424 475.4,419.3" fill="#1c3040" stroke="#0a1118" stroke-width="0.48" stroke-linejoin="round" />
<polygon points="489.3,416.9 479.4,423 479.4,424 489.3,417.9" fill="#16252f" stroke="#0a1118" stroke-width="0.48" stroke-linejoin="round" />
<polygon points="485.3,412.2 489.3,416.9 479.4,423 475.4,418.3" fill="#66ccff" stroke="#0a1118" stroke-width="0.6" stroke-linejoin="round" />
<polygon points="481.5,425.4 486.1,430.7 486.1,431.7 481.5,426.4" fill="#1c3040" stroke="#0a1118" stroke-width="0.48" stroke-linejoin="round" />
<polygon points="496,424.6 486.1,430.7 486.1,431.7 496,425.6" fill="#16252f" stroke="#0a1118" stroke-width="0.48" stroke-linejoin="round" />
<polygon points="491.4,419.3 496,424.6 486.1,430.7 481.5,425.4" fill="#66ccff" stroke="#0a1118" stroke-width="0.6" stroke-linejoin="round" />
<polygon points="487.9,432.8 492.5,438.1 492.5,439.1 487.9,433.8" fill="#1c3040" stroke="#0a1118" stroke-width="0.48" stroke-linejoin="round" />
<polygon points="502.4,432 492.5,438.1 492.5,439.1 502.4,433" fill="#16252f" stroke="#0a1118" stroke-width="0.48" stroke-linejoin="round" />
<polygon points="497.8,426.7 502.4,432 492.5,438.1 487.9,432.8" fill="#66ccff" stroke="#0a1118" stroke-width="0.6" stroke-linejoin="round" />
<polygon points="494.3,440.2 498.9,445.5 498.9,446.5 494.3,441.2" fill="#1c3040" stroke="#0a1118" stroke-width="0.48" stroke-linejoin="round" />
<polygon points="508.8,439.4 498.9,445.5 498.9,446.5 508.8,440.4" fill="#16252f" stroke="#0a1118" stroke-width="0.48" stroke-linejoin="round" />
<polygon points="504.2,434.1 508.8,439.4 498.9,445.5 494.3,440.2" fill="#66ccff" stroke="#0a1118" stroke-width="0.6" stroke-linejoin="round" />
<polygon points="500.7,447.6 505.3,452.9 505.3,453.9 500.7,448.6" fill="#1c3040" stroke="#0a1118" stroke-width="0.48" stroke-linejoin="round" />
<polygon points="515.2,446.8 505.3,452.9 505.3,453.9 515.2,447.8" fill="#16252f" stroke="#0a1118" stroke-width="0.48" stroke-linejoin="round" />
<polygon points="510.6,441.5 515.2,446.8 505.3,452.9 500.7,447.6" fill="#66ccff" stroke="#0a1118" stroke-width="0.6" stroke-linejoin="round" />
<polygon points="507.1,455 511.7,460.3 511.7,461.3 507.1,456" fill="#1c3040" stroke="#0a1118" stroke-width="0.48" stroke-linejoin="round" />
<polygon points="521.6,454.2 511.7,460.3 511.7,461.3 521.6,455.2" fill="#16252f" stroke="#0a1118" stroke-width="0.48" stroke-linejoin="round" />
<polygon points="517,448.9 521.6,454.2 511.7,460.3 507.1,455" fill="#66ccff" stroke="#0a1118" stroke-width="0.6" stroke-linejoin="round" />
<polygon points="513.5,462.4 518.1,467.7 518.1,468.7 513.5,463.4" fill="#1c3040" stroke="#0a1118" stroke-width="0.48" stroke-linejoin="round" />
<polygon points="528,461.6 518.1,467.7 518.1,468.7 528,462.6" fill="#16252f" stroke="#0a1118" stroke-width="0.48" stroke-linejoin="round" />
<polygon points="523.4,456.3 528,461.6 518.1,467.7 513.5,462.4" fill="#66ccff" stroke="#0a1118" stroke-width="0.6" stroke-linejoin="round" />
<polygon points="519.9,469.8 524.5,475.1 524.5,476.1 519.9,470.8" fill="#1c3040" stroke="#0a1118" stroke-width="0.48" stroke-linejoin="round" />
<polygon points="534.4,469 524.5,475.1 524.5,476.1 534.4,470" fill="#16252f" stroke="#0a1118" stroke-width="0.48" stroke-linejoin="round" />
<polygon points="529.8,463.7 534.4,469 524.5,475.1 519.9,469.8" fill="#66ccff" stroke="#0a1118" stroke-width="0.6" stroke-linejoin="round" />
<polygon points="526.3,477.2 530.9,482.5 530.9,483.5 526.3,478.2" fill="#1c3040" stroke="#0a1118" stroke-width="0.48" stroke-linejoin="round" />
<polygon points="540.8,476.4 530.9,482.5 530.9,483.5 540.8,477.4" fill="#16252f" stroke="#0a1118" stroke-width="0.48" stroke-linejoin="round" />
<polygon points="536.2,471.1 540.8,476.4 530.9,482.5 526.3,477.2" fill="#66ccff" stroke="#0a1118" stroke-width="0.6" stroke-linejoin="round" />
<polygon points="532.7,484.6 537.3,489.9 537.3,490.9 532.7,485.6" fill="#1c3040" stroke="#0a1118" stroke-width="0.48" stroke-linejoin="round" />
<polygon points="547.2,483.8 537.3,489.9 537.3,490.9 547.2,484.8" fill="#16252f" stroke="#0a1118" stroke-width="0.48" stroke-linejoin="round" />
<polygon points="542.6,478.5 547.2,483.8 537.3,489.9 532.7,484.6" fill="#66ccff" stroke="#0a1118" stroke-width="0.6" stroke-linejoin="round" />
<polygon points="539.1,492 543.7,497.3 543.7,498.3 539.1,493" fill="#1c3040" stroke="#0a1118" stroke-width="0.48" stroke-linejoin="round" />
<polygon points="553.6,491.2 543.7,497.3 543.7,498.3 553.6,492.2" fill="#16252f" stroke="#0a1118" stroke-width="0.48" stroke-linejoin="round" />
<polygon points="549,485.9 553.6,491.2 543.7,497.3 539.1,492" fill="#66ccff" stroke="#0a1118" stroke-width="0.6" stroke-linejoin="round" />
<polygon points="545.5,499.4 550.1,504.7 550.1,505.7 545.5,500.4" fill="#1c3040" stroke="#0a1118" stroke-width="0.48" stroke-linejoin="round" />
<polygon points="560,498.6 550.1,504.7 550.1,505.7 560,499.6" fill="#16252f" stroke="#0a1118" stroke-width="0.48" stroke-linejoin="round" />
<polygon points="555.4,493.3 560,498.6 550.1,504.7 545.5,499.4" fill="#66ccff" stroke="#0a1118" stroke-width="0.6" stroke-linejoin="round" />
<polygon points="551.9,506.8 556.5,512.1 556.5,513.1 551.9,507.8" fill="#1c3040" stroke="#0a1118" stroke-width="0.48" stroke-linejoin="round" />
<polygon points="566.4,506 556.5,512.1 556.5,513.1 566.4,507" fill="#16252f" stroke="#0a1118" stroke-width="0.48" stroke-linejoin="round" />
<polygon points="561.8,500.7 566.4,506 556.5,512.1 551.9,506.8" fill="#66ccff" stroke="#0a1118" stroke-width="0.6" stroke-linejoin="round" />
<polygon points="558.3,514.2 562.9,519.5 562.9,520.5 558.3,515.2" fill="#1c3040" stroke="#0a1118" stroke-width="0.48" stroke-linejoin="round" />
<polygon points="572.8,513.4 562.9,519.5 562.9,520.5 572.8,514.4" fill="#16252f" stroke="#0a1118" stroke-width="0.48" stroke-linejoin="round" />
<polygon points="568.2,508.1 572.8,513.4 562.9,519.5 558.3,514.2" fill="#66ccff" stroke="#0a1118" stroke-width="0.6" stroke-linejoin="round" />
<polygon points="564.7,521.6 569.3,526.9 569.3,527.9 564.7,522.6" fill="#1c3040" stroke="#0a1118" stroke-width="0.48" stroke-linejoin="round" />
<polygon points="579.2,520.8 569.3,526.9 569.3,527.9 579.2,521.8" fill="#16252f" stroke="#0a1118" stroke-width="0.48" stroke-linejoin="round" />
<polygon points="574.6,515.5 579.2,520.8 569.3,526.9 564.7,521.6" fill="#66ccff" stroke="#0a1118" stroke-width="0.6" stroke-linejoin="round" />
<polygon points="463,427.9 470.3,436.4 470.3,437.4 463,428.9" fill="#1c3040" stroke="#0a1118" stroke-width="0.48" stroke-linejoin="round" />
<polygon points="480.2,430.3 470.3,436.4 470.3,437.4 480.2,431.3" fill="#16252f" stroke="#0a1118" stroke-width="0.48" stroke-linejoin="round" />
<polygon points="472.9,421.8 480.2,430.3 470.3,436.4 463,427.9" fill="#66ccff" stroke="#0a1118" stroke-width="0.6" stroke-linejoin="round" />
<polygon points="472.8,438.5 477.4,443.8 477.4,444.8 472.8,439.5" fill="#1c3040" stroke="#0a1118" stroke-width="0.48" stroke-linejoin="round" />
<polygon points="487.2,437.7 477.4,443.8 477.4,444.8 487.2,438.7" fill="#16252f" stroke="#0a1118" stroke-width="0.48" stroke-linejoin="round" />
<polygon points="482.6,432.4 487.2,437.7 477.4,443.8 472.8,438.5" fill="#66ccff" stroke="#0a1118" stroke-width="0.6" stroke-linejoin="round" />
<polygon points="479.2,445.9 483.8,451.2 483.8,452.2 479.2,446.9" fill="#1c3040" stroke="#0a1118" stroke-width="0.48" stroke-linejoin="round" />
<polygon points="493.6,445.1 483.8,451.2 483.8,452.2 493.6,446.1" fill="#16252f" stroke="#0a1118" stroke-width="0.48" stroke-linejoin="round" />
<polygon points="489,439.8 493.6,445.1 483.8,451.2 479.2,445.9" fill="#66ccff" stroke="#0a1118" stroke-width="0.6" stroke-linejoin="round" />
<polygon points="485.6,453.3 490.2,458.6 490.2,459.6 485.6,454.3" fill="#1c3040" stroke="#0a1118" stroke-width="0.48" stroke-linejoin="round" />
<polygon points="500,452.5 490.2,458.6 490.2,459.6 500,453.5" fill="#16252f" stroke="#0a1118" stroke-width="0.48" stroke-linejoin="round" />
<polygon points="495.4,447.2 500,452.5 490.2,458.6 485.6,453.3" fill="#66ccff" stroke="#0a1118" stroke-width="0.6" stroke-linejoin="round" />
<polygon points="492,460.7 496.6,466 496.6,467 492,461.7" fill="#1c3040" stroke="#0a1118" stroke-width="0.48" stroke-linejoin="round" />
<polygon points="506.4,459.9 496.6,466 496.6,467 506.4,460.9" fill="#16252f" stroke="#0a1118" stroke-width="0.48" stroke-linejoin="round" />
<polygon points="501.8,454.6 506.4,459.9 496.6,466 492,460.7" fill="#66ccff" stroke="#0a1118" stroke-width="0.6" stroke-linejoin="round" />
<polygon points="498.4,468.1 503,473.4 503,474.4 498.4,469.1" fill="#1c3040" stroke="#0a1118" stroke-width="0.48" stroke-linejoin="round" />
<polygon points="512.8,467.3 503,473.4 503,474.4 512.8,468.3" fill="#16252f" stroke="#0a1118" stroke-width="0.48" stroke-linejoin="round" />
<polygon points="508.2,462 512.8,467.3 503,473.4 498.4,468.1" fill="#66ccff" stroke="#0a1118" stroke-width="0.6" stroke-linejoin="round" />
<polygon points="504.8,475.5 509.4,480.8 509.4,481.8 504.8,476.5" fill="#1c3040" stroke="#0a1118" stroke-width="0.48" stroke-linejoin="round" />
<polygon points="519.2,474.7 509.4,480.8 509.4,481.8 519.2,475.7" fill="#16252f" stroke="#0a1118" stroke-width="0.48" stroke-linejoin="round" />
<polygon points="514.6,469.4 519.2,474.7 509.4,480.8 504.8,475.5" fill="#66ccff" stroke="#0a1118" stroke-width="0.6" stroke-linejoin="round" />
<polygon points="511.2,482.9 515.8,488.2 515.8,489.2 511.2,483.9" fill="#1c3040" stroke="#0a1118" stroke-width="0.48" stroke-linejoin="round" />
<polygon points="525.6,482.1 515.8,488.2 515.8,489.2 525.6,483.1" fill="#16252f" stroke="#0a1118" stroke-width="0.48" stroke-linejoin="round" />
<polygon points="521,476.8 525.6,482.1 515.8,488.2 511.2,482.9" fill="#66ccff" stroke="#0a1118" stroke-width="0.6" stroke-linejoin="round" />
<polygon points="517.6,490.3 522.2,495.6 522.2,496.6 517.6,491.3" fill="#1c3040" stroke="#0a1118" stroke-width="0.48" stroke-linejoin="round" />
<polygon points="532,489.5 522.2,495.6 522.2,496.6 532,490.5" fill="#16252f" stroke="#0a1118" stroke-width="0.48" stroke-linejoin="round" />
<polygon points="527.4,484.2 532,489.5 522.2,495.6 517.6,490.3" fill="#66ccff" stroke="#0a1118" stroke-width="0.6" stroke-linejoin="round" />
<polygon points="524,497.7 528.6,503 528.6,504 524,498.7" fill="#1c3040" stroke="#0a1118" stroke-width="0.48" stroke-linejoin="round" />
<polygon points="538.4,496.9 528.6,503 528.6,504 538.4,497.9" fill="#16252f" stroke="#0a1118" stroke-width="0.48" stroke-linejoin="round" />
<polygon points="533.8,491.6 538.4,496.9 528.6,503 524,497.7" fill="#66ccff" stroke="#0a1118" stroke-width="0.6" stroke-linejoin="round" />
<polygon points="530.4,505.1 535,510.4 535,511.4 530.4,506.1" fill="#1c3040" stroke="#0a1118" stroke-width="0.48" stroke-linejoin="round" />
<polygon points="544.8,504.3 535,510.4 535,511.4 544.8,505.3" fill="#16252f" stroke="#0a1118" stroke-width="0.48" stroke-linejoin="round" />
<polygon points="540.2,499 544.8,504.3 535,510.4 530.4,505.1" fill="#66ccff" stroke="#0a1118" stroke-width="0.6" stroke-linejoin="round" />
<polygon points="536.8,512.5 541.4,517.8 541.4,518.8 536.8,513.5" fill="#1c3040" stroke="#0a1118" stroke-width="0.48" stroke-linejoin="round" />
<polygon points="551.2,511.7 541.4,517.8 541.4,518.8 551.2,512.7" fill="#16252f" stroke="#0a1118" stroke-width="0.48" stroke-linejoin="round" />
<polygon points="546.6,506.4 551.2,511.7 541.4,517.8 536.8,512.5" fill="#66ccff" stroke="#0a1118" stroke-width="0.6" stroke-linejoin="round" />
<polygon points="543.2,519.9 547.8,525.2 547.8,526.2 543.2,520.9" fill="#1c3040" stroke="#0a1118" stroke-width="0.48" stroke-linejoin="round" />
<polygon points="557.6,519.1 547.8,525.2 547.8,526.2 557.6,520.1" fill="#16252f" stroke="#0a1118" stroke-width="0.48" stroke-linejoin="round" />
<polygon points="553,513.8 557.6,519.1 547.8,525.2 543.2,519.9" fill="#66ccff" stroke="#0a1118" stroke-width="0.6" stroke-linejoin="round" />
<polygon points="549.6,527.3 554.2,532.6 554.2,533.6 549.6,528.3" fill="#1c3040" stroke="#0a1118" stroke-width="0.48" stroke-linejoin="round" />
<polygon points="564,526.5 554.2,532.6 554.2,533.6 564,527.5" fill="#16252f" stroke="#0a1118" stroke-width="0.48" stroke-linejoin="round" />
<polygon points="559.4,521.2 564,526.5 554.2,532.6 549.6,527.3" fill="#66ccff" stroke="#0a1118" stroke-width="0.6" stroke-linejoin="round" />
<polygon points="450.4,436 458.7,445.7 458.7,446.7 450.4,437" fill="#1c3040" stroke="#0a1118" stroke-width="0.48" stroke-linejoin="round" />
<polygon points="468.6,439.6 458.7,445.7 458.7,446.7 468.6,440.6" fill="#16252f" stroke="#0a1118" stroke-width="0.48" stroke-linejoin="round" />
<polygon points="460.3,429.9 468.6,439.6 458.7,445.7 450.4,436" fill="#66ccff" stroke="#0a1118" stroke-width="0.6" stroke-linejoin="round" />
<polygon points="461.2,449.8 465.8,455.1 465.8,456.1 461.2,450.8" fill="#1c3040" stroke="#0a1118" stroke-width="0.48" stroke-linejoin="round" />
<polygon points="475.6,449 465.8,455.1 465.8,456.1 475.6,450" fill="#16252f" stroke="#0a1118" stroke-width="0.48" stroke-linejoin="round" />
<polygon points="471,443.7 475.6,449 465.8,455.1 461.2,449.8" fill="#66ccff" stroke="#0a1118" stroke-width="0.6" stroke-linejoin="round" />
<polygon points="467.6,457.2 472.2,462.5 472.2,463.5 467.6,458.2" fill="#1c3040" stroke="#0a1118" stroke-width="0.48" stroke-linejoin="round" />
<polygon points="482,456.4 472.2,462.5 472.2,463.5 482,457.4" fill="#16252f" stroke="#0a1118" stroke-width="0.48" stroke-linejoin="round" />
<polygon points="477.4,451.1 482,456.4 472.2,462.5 467.6,457.2" fill="#66ccff" stroke="#0a1118" stroke-width="0.6" stroke-linejoin="round" />
<polygon points="474,464.6 478.6,469.9 478.6,470.9 474,465.6" fill="#1c3040" stroke="#0a1118" stroke-width="0.48" stroke-linejoin="round" />
<polygon points="488.4,463.8 478.6,469.9 478.6,470.9 488.4,464.8" fill="#16252f" stroke="#0a1118" stroke-width="0.48" stroke-linejoin="round" />
<polygon points="483.8,458.5 488.4,463.8 478.6,469.9 474,464.6" fill="#66ccff" stroke="#0a1118" stroke-width="0.6" stroke-linejoin="round" />
<polygon points="480.4,472 485,477.3 485,478.3 480.4,473" fill="#1c3040" stroke="#0a1118" stroke-width="0.48" stroke-linejoin="round" />
<polygon points="494.8,471.2 485,477.3 485,478.3 494.8,472.2" fill="#16252f" stroke="#0a1118" stroke-width="0.48" stroke-linejoin="round" />
<polygon points="490.2,465.9 494.8,471.2 485,477.3 480.4,472" fill="#66ccff" stroke="#0a1118" stroke-width="0.6" stroke-linejoin="round" />
<polygon points="486.8,479.4 491.4,484.7 491.4,485.7 486.8,480.4" fill="#1c3040" stroke="#0a1118" stroke-width="0.48" stroke-linejoin="round" />
<polygon points="501.2,478.6 491.4,484.7 491.4,485.7 501.2,479.6" fill="#16252f" stroke="#0a1118" stroke-width="0.48" stroke-linejoin="round" />
<polygon points="496.6,473.3 501.2,478.6 491.4,484.7 486.8,479.4" fill="#66ccff" stroke="#0a1118" stroke-width="0.6" stroke-linejoin="round" />
<polygon points="493.2,486.8 497.8,492.1 497.8,493.1 493.2,487.8" fill="#1c3040" stroke="#0a1118" stroke-width="0.48" stroke-linejoin="round" />
<polygon points="507.6,486 497.8,492.1 497.8,493.1 507.6,487" fill="#16252f" stroke="#0a1118" stroke-width="0.48" stroke-linejoin="round" />
<polygon points="503,480.7 507.6,486 497.8,492.1 493.2,486.8" fill="#66ccff" stroke="#0a1118" stroke-width="0.6" stroke-linejoin="round" />
<polygon points="499.6,494.2 504.2,499.5 504.2,500.5 499.6,495.2" fill="#1c3040" stroke="#0a1118" stroke-width="0.48" stroke-linejoin="round" />
<polygon points="514,493.4 504.2,499.5 504.2,500.5 514,494.4" fill="#16252f" stroke="#0a1118" stroke-width="0.48" stroke-linejoin="round" />
<polygon points="509.4,488.1 514,493.4 504.2,499.5 499.6,494.2" fill="#66ccff" stroke="#0a1118" stroke-width="0.6" stroke-linejoin="round" />
<polygon points="506,501.6 510.6,506.9 510.6,507.9 506,502.6" fill="#1c3040" stroke="#0a1118" stroke-width="0.48" stroke-linejoin="round" />
<polygon points="520.4,500.8 510.6,506.9 510.6,507.9 520.4,501.8" fill="#16252f" stroke="#0a1118" stroke-width="0.48" stroke-linejoin="round" />
<polygon points="515.8,495.5 520.4,500.8 510.6,506.9 506,501.6" fill="#66ccff" stroke="#0a1118" stroke-width="0.6" stroke-linejoin="round" />
<polygon points="512.4,509 517,514.3 517,515.3 512.4,510" fill="#1c3040" stroke="#0a1118" stroke-width="0.48" stroke-linejoin="round" />
<polygon points="526.8,508.2 517,514.3 517,515.3 526.8,509.2" fill="#16252f" stroke="#0a1118" stroke-width="0.48" stroke-linejoin="round" />
<polygon points="522.2,502.9 526.8,508.2 517,514.3 512.4,509" fill="#66ccff" stroke="#0a1118" stroke-width="0.6" stroke-linejoin="round" />
<polygon points="518.8,516.4 523.4,521.7 523.4,522.7 518.8,517.4" fill="#1c3040" stroke="#0a1118" stroke-width="0.48" stroke-linejoin="round" />
<polygon points="533.2,515.6 523.4,521.7 523.4,522.7 533.2,516.6" fill="#16252f" stroke="#0a1118" stroke-width="0.48" stroke-linejoin="round" />
<polygon points="528.6,510.3 533.2,515.6 523.4,521.7 518.8,516.4" fill="#66ccff" stroke="#0a1118" stroke-width="0.6" stroke-linejoin="round" />
<polygon points="525.2,523.8 529.8,529.1 529.8,530.1 525.2,524.8" fill="#1c3040" stroke="#0a1118" stroke-width="0.48" stroke-linejoin="round" />
<polygon points="539.6,523 529.8,529.1 529.8,530.1 539.6,524" fill="#16252f" stroke="#0a1118" stroke-width="0.48" stroke-linejoin="round" />
<polygon points="535,517.7 539.6,523 529.8,529.1 525.2,523.8" fill="#66ccff" stroke="#0a1118" stroke-width="0.6" stroke-linejoin="round" />
<polygon points="531.6,531.2 536.2,536.5 536.2,537.5 531.6,532.2" fill="#1c3040" stroke="#0a1118" stroke-width="0.48" stroke-linejoin="round" />
<polygon points="546,530.4 536.2,536.5 536.2,537.5 546,531.4" fill="#16252f" stroke="#0a1118" stroke-width="0.48" stroke-linejoin="round" />
<polygon points="541.4,525.1 546,530.4 536.2,536.5 531.6,531.2" fill="#66ccff" stroke="#0a1118" stroke-width="0.6" stroke-linejoin="round" />
<polygon points="438.1,444.5 449.6,457.8 449.6,458.8 438.1,445.5" fill="#1c3040" stroke="#0a1118" stroke-width="0.48" stroke-linejoin="round" />
<polygon points="459.4,451.7 449.6,457.8 449.6,458.8 459.4,452.7" fill="#16252f" stroke="#0a1118" stroke-width="0.48" stroke-linejoin="round" />
<polygon points="447.9,438.4 459.4,451.7 449.6,457.8 438.1,444.5" fill="#66ccff" stroke="#0a1118" stroke-width="0.6" stroke-linejoin="round" />
<polygon points="451.5,461 456.1,466.3 456.1,467.3 451.5,462" fill="#1c3040" stroke="#0a1118" stroke-width="0.48" stroke-linejoin="round" />
<polygon points="466,460.2 456.1,466.3 456.1,467.3 466,461.2" fill="#16252f" stroke="#0a1118" stroke-width="0.48" stroke-linejoin="round" />
<polygon points="461.4,454.9 466,460.2 456.1,466.3 451.5,461" fill="#66ccff" stroke="#0a1118" stroke-width="0.6" stroke-linejoin="round" />
<polygon points="457.9,468.4 462.5,473.7 462.5,474.7 457.9,469.4" fill="#1c3040" stroke="#0a1118" stroke-width="0.48" stroke-linejoin="round" />
<polygon points="472.4,467.6 462.5,473.7 462.5,474.7 472.4,468.6" fill="#16252f" stroke="#0a1118" stroke-width="0.48" stroke-linejoin="round" />
<polygon points="467.8,462.3 472.4,467.6 462.5,473.7 457.9,468.4" fill="#66ccff" stroke="#0a1118" stroke-width="0.6" stroke-linejoin="round" />
<polygon points="464.3,475.8 468.9,481.1 468.9,482.1 464.3,476.8" fill="#1c3040" stroke="#0a1118" stroke-width="0.48" stroke-linejoin="round" />
<polygon points="478.8,475 468.9,481.1 468.9,482.1 478.8,476" fill="#16252f" stroke="#0a1118" stroke-width="0.48" stroke-linejoin="round" />
<polygon points="474.2,469.7 478.8,475 468.9,481.1 464.3,475.8" fill="#66ccff" stroke="#0a1118" stroke-width="0.6" stroke-linejoin="round" />
<polygon points="470.7,483.2 475.3,488.5 475.3,489.5 470.7,484.2" fill="#1c3040" stroke="#0a1118" stroke-width="0.48" stroke-linejoin="round" />
<polygon points="485.2,482.4 475.3,488.5 475.3,489.5 485.2,483.4" fill="#16252f" stroke="#0a1118" stroke-width="0.48" stroke-linejoin="round" />
<polygon points="480.6,477.1 485.2,482.4 475.3,488.5 470.7,483.2" fill="#66ccff" stroke="#0a1118" stroke-width="0.6" stroke-linejoin="round" />
<polygon points="477.1,490.6 481.7,495.9 481.7,496.9 477.1,491.6" fill="#1c3040" stroke="#0a1118" stroke-width="0.48" stroke-linejoin="round" />
<polygon points="491.6,489.8 481.7,495.9 481.7,496.9 491.6,490.8" fill="#16252f" stroke="#0a1118" stroke-width="0.48" stroke-linejoin="round" />
<polygon points="487,484.5 491.6,489.8 481.7,495.9 477.1,490.6" fill="#66ccff" stroke="#0a1118" stroke-width="0.6" stroke-linejoin="round" />
<polygon points="483.5,498 488.1,503.3 488.1,504.3 483.5,499" fill="#1c3040" stroke="#0a1118" stroke-width="0.48" stroke-linejoin="round" />
<polygon points="498,497.2 488.1,503.3 488.1,504.3 498,498.2" fill="#16252f" stroke="#0a1118" stroke-width="0.48" stroke-linejoin="round" />
<polygon points="493.4,491.9 498,497.2 488.1,503.3 483.5,498" fill="#66ccff" stroke="#0a1118" stroke-width="0.6" stroke-linejoin="round" />
<polygon points="489.9,505.4 494.5,510.7 494.5,511.7 489.9,506.4" fill="#1c3040" stroke="#0a1118" stroke-width="0.48" stroke-linejoin="round" />
<polygon points="504.4,504.6 494.5,510.7 494.5,511.7 504.4,505.6" fill="#16252f" stroke="#0a1118" stroke-width="0.48" stroke-linejoin="round" />
<polygon points="499.8,499.3 504.4,504.6 494.5,510.7 489.9,505.4" fill="#66ccff" stroke="#0a1118" stroke-width="0.6" stroke-linejoin="round" />
<polygon points="496.3,512.8 500.9,518.1 500.9,519.1 496.3,513.8" fill="#1c3040" stroke="#0a1118" stroke-width="0.48" stroke-linejoin="round" />
<polygon points="510.8,512 500.9,518.1 500.9,519.1 510.8,513" fill="#16252f" stroke="#0a1118" stroke-width="0.48" stroke-linejoin="round" />
<polygon points="506.2,506.7 510.8,512 500.9,518.1 496.3,512.8" fill="#66ccff" stroke="#0a1118" stroke-width="0.6" stroke-linejoin="round" />
<polygon points="502.7,520.2 507.3,525.5 507.3,526.5 502.7,521.2" fill="#1c3040" stroke="#0a1118" stroke-width="0.48" stroke-linejoin="round" />
<polygon points="517.2,519.4 507.3,525.5 507.3,526.5 517.2,520.4" fill="#16252f" stroke="#0a1118" stroke-width="0.48" stroke-linejoin="round" />
<polygon points="512.6,514.1 517.2,519.4 507.3,525.5 502.7,520.2" fill="#66ccff" stroke="#0a1118" stroke-width="0.6" stroke-linejoin="round" />
<polygon points="509.1,527.6 513.7,532.9 513.7,533.9 509.1,528.6" fill="#1c3040" stroke="#0a1118" stroke-width="0.48" stroke-linejoin="round" />
<polygon points="523.6,526.8 513.7,532.9 513.7,533.9 523.6,527.8" fill="#16252f" stroke="#0a1118" stroke-width="0.48" stroke-linejoin="round" />
<polygon points="519,521.5 523.6,526.8 513.7,532.9 509.1,527.6" fill="#66ccff" stroke="#0a1118" stroke-width="0.6" stroke-linejoin="round" />
<polygon points="515.5,535 520.1,540.3 520.1,541.3 515.5,536" fill="#1c3040" stroke="#0a1118" stroke-width="0.48" stroke-linejoin="round" />
<polygon points="530,534.2 520.1,540.3 520.1,541.3 530,535.2" fill="#16252f" stroke="#0a1118" stroke-width="0.48" stroke-linejoin="round" />
<polygon points="525.4,528.9 530,534.2 520.1,540.3 515.5,535" fill="#66ccff" stroke="#0a1118" stroke-width="0.6" stroke-linejoin="round" />
<polygon points="571.9,529.9 577.6,536.6 577.6,537.6 571.9,530.9" fill="#1c3040" stroke="#0a1118" stroke-width="0.48" stroke-linejoin="round" />
<polygon points="586.1,531.3 577.6,536.6 577.6,537.6 586.1,532.3" fill="#16252f" stroke="#0a1118" stroke-width="0.48" stroke-linejoin="round" />
<polygon points="580.4,524.7 586.1,531.3 577.6,536.6 571.9,529.9" fill="#66ccff" stroke="#0a1118" stroke-width="0.6" stroke-linejoin="round" />
<polygon points="586,546.2 589.4,550.2 589.4,551.2 586,547.2" fill="#1c3040" stroke="#0a1118" stroke-width="0.48" stroke-linejoin="round" />
<polygon points="597.7,545 589.4,550.2 589.4,551.2 597.7,546" fill="#16252f" stroke="#0a1118" stroke-width="0.48" stroke-linejoin="round" />
<polygon points="594.3,541.1 597.7,545 589.4,550.2 586,546.2" fill="#66ccff" stroke="#0a1118" stroke-width="0.6" stroke-linejoin="round" />
<polygon points="571.5,555.5 574.6,559.1 574.6,560.1 571.5,556.5" fill="#1c3040" stroke="#0a1118" stroke-width="0.48" stroke-linejoin="round" />
<polygon points="583,554 574.6,559.1 574.6,560.1 583,555" fill="#16252f" stroke="#0a1118" stroke-width="0.48" stroke-linejoin="round" />
<polygon points="579.9,550.4 583,554 574.6,559.1 571.5,555.5" fill="#66ccff" stroke="#0a1118" stroke-width="0.6" stroke-linejoin="round" />
<polygon points="559.3,563.8 562.7,567.8 562.7,568.8 559.3,564.8" fill="#1c3040" stroke="#0a1118" stroke-width="0.48" stroke-linejoin="round" />
<polygon points="570.2,563.2 562.7,567.8 562.7,568.8 570.2,564.2" fill="#16252f" stroke="#0a1118" stroke-width="0.48" stroke-linejoin="round" />
<polygon points="566.8,559.2 570.2,563.2 562.7,567.8 559.3,563.8" fill="#66ccff" stroke="#0a1118" stroke-width="0.6" stroke-linejoin="round" />
<polygon points="546.4,573.5 549.8,577.4 549.8,578.4 546.4,574.5" fill="#1c3040" stroke="#0a1118" stroke-width="0.48" stroke-linejoin="round" />
<polygon points="557.3,572.8 549.8,577.4 549.8,578.4 557.3,573.8" fill="#16252f" stroke="#0a1118" stroke-width="0.48" stroke-linejoin="round" />
<polygon points="553.9,568.9 557.3,572.8 549.8,577.4 546.4,573.5" fill="#66ccff" stroke="#0a1118" stroke-width="0.6" stroke-linejoin="round" />
<polygon points="559.5,544.7 563.4,549.3 563.4,550.3 559.5,545.7" fill="#1c3040" stroke="#0a1118" stroke-width="0.48" stroke-linejoin="round" />
<polygon points="571.5,544.3 563.4,549.3 563.4,550.3 571.5,545.3" fill="#16252f" stroke="#0a1118" stroke-width="0.48" stroke-linejoin="round" />
<polygon points="567.6,539.7 571.5,544.3 563.4,549.3 559.5,544.7" fill="#66ccff" stroke="#0a1118" stroke-width="0.6" stroke-linejoin="round" />
<polygon points="545.8,547.8 553.1,556.2 553.1,557.2 545.8,548.8" fill="#1c3040" stroke="#0a1118" stroke-width="0.48" stroke-linejoin="round" />
<polygon points="561.2,551.2 553.1,556.2 553.1,557.2 561.2,552.2" fill="#16252f" stroke="#0a1118" stroke-width="0.48" stroke-linejoin="round" />
<polygon points="553.9,542.8 561.2,551.2 553.1,556.2 545.8,547.8" fill="#66ccff" stroke="#0a1118" stroke-width="0.6" stroke-linejoin="round" />
<polygon points="557.5,540.5 563.5,536.8 569.5,543.5 563.5,547.5" fill="#66ccff" />
<polygon points="527.1,553.6 538.3,566.5 538.3,567.5 527.1,554.6" fill="#1c3040" stroke="#0a1118" stroke-width="0.48" stroke-linejoin="round" />
<polygon points="546.6,561.4 538.3,566.5 538.3,567.5 546.6,562.4" fill="#16252f" stroke="#0a1118" stroke-width="0.48" stroke-linejoin="round" />
<polygon points="535.5,548.5 546.6,561.4 538.3,566.5 527.1,553.6" fill="#66ccff" stroke="#0a1118" stroke-width="0.6" stroke-linejoin="round" />
<polygon points="442.2,475.2 445.6,472.8 513.1,558.8 510,561.2" fill="#1c3040" />
<polygon points="445.2,472.1 448.6,476 448.6,477 445.2,473.1" fill="#1c3040" stroke="#0a1118" stroke-width="0.48" stroke-linejoin="round" />
<polygon points="452.8,473.4 448.6,476 448.6,477 452.8,474.4" fill="#16252f" stroke="#0a1118" stroke-width="0.48" stroke-linejoin="round" />
<polygon points="449.4,469.5 452.8,473.4 448.6,476 445.2,472.1" fill="#66ccff" stroke="#0a1118" stroke-width="0.6" stroke-linejoin="round" />
<polygon points="493.8,533.8 500,529 523.1,553.8 511.2,561.5" fill="#1c3040" />
<polygon points="496,536.7 499.4,540.6 499.4,541.6 496,537.7" fill="#1c3040" stroke="#0a1118" stroke-width="0.48" stroke-linejoin="round" />
<polygon points="505.2,537.1 499.4,540.6 499.4,541.6 505.2,538.1" fill="#16252f" stroke="#0a1118" stroke-width="0.48" stroke-linejoin="round" />
<polygon points="501.8,533.1 505.2,537.1 499.4,540.6 496,536.7" fill="#66ccff" stroke="#0a1118" stroke-width="0.6" stroke-linejoin="round" />
<polygon points="504.4,546.7 507.8,550.6 507.8,551.6 504.4,547.7" fill="#1c3040" stroke="#0a1118" stroke-width="0.48" stroke-linejoin="round" />
<polygon points="513.6,547.1 507.8,550.6 507.8,551.6 513.6,548.1" fill="#16252f" stroke="#0a1118" stroke-width="0.48" stroke-linejoin="round" />
<polygon points="510.2,543.1 513.6,547.1 507.8,550.6 504.4,546.7" fill="#66ccff" stroke="#0a1118" stroke-width="0.6" stroke-linejoin="round" />
<polygon points="581.9,460.8 589.9,452.8 657,520.8 643,530.8" fill="#000" opacity="0.38" filter="url(#sh)"/>
<polygon points="575.6,422.3 580.1,424.8 641.5,490.8 636.7,492.3" fill="#a2a8a8" stroke="#0a1118" stroke-width="0.84" stroke-linejoin="round" />
<polygon points="629,500.8 630.9,497.9 636.7,492.3 641.5,490.8 641.2,496.3 630.2,506.3" fill="#2c2f30" stroke="#0a1118" stroke-width="0.84" stroke-linejoin="round" />
<polygon points="567.9,430.8 629,500.8 630.2,506.3 568.7,433.8" fill="#141617" stroke="#0a1118" stroke-width="0.72" stroke-linejoin="round" />
<polygon points="567.9,430.8 569.8,427.9 630.9,497.9 629,500.8" fill="#767d7f" stroke="#0a1118" stroke-width="0.72" stroke-linejoin="round" />
<polygon points="569.8,427.9 575.6,422.3 636.7,492.3 630.9,497.9" fill="#b9bebe" stroke="#0a1118" stroke-width="0.84" stroke-linejoin="round" />
<polyline points="579.9,444.6 581.8,441.7 587.6,436.1" fill="none" stroke="#0a1118" stroke-width="0.8" stroke-linejoin="round" />
<polyline points="592,458.4 593.9,455.5 599.7,449.9" fill="none" stroke="#0a1118" stroke-width="0.8" stroke-linejoin="round" />
<polyline points="604,472.2 605.9,469.3 611.7,463.7" fill="none" stroke="#0a1118" stroke-width="0.8" stroke-linejoin="round" />
<polyline points="616,486 617.9,483.1 623.7,477.5" fill="none" stroke="#0a1118" stroke-width="0.8" stroke-linejoin="round" />
<polygon points="543.5,388 546,387 551.5,393.5 552,396.5 548.5,399.5 545,397 546,393.5" fill="#1c3040" stroke="#0c151c" stroke-width="0.6" stroke-linejoin="round" />
<circle cx="545.2" cy="389.4" r="0.9" fill="#4aa3dc"/>
<circle cx="549.3" cy="394.2" r="0.9" fill="#4aa3dc"/>
<circle cx="546.9" cy="396.2" r="0.9" fill="#4aa3dc"/>
<polygon points="554.8,400.5 557.3,399.5 562.8,406 563.3,409 559.8,412 556.3,409.5 557.3,406" fill="#1c3040" stroke="#0c151c" stroke-width="0.6" stroke-linejoin="round" />
<circle cx="556.5" cy="401.9" r="0.9" fill="#4aa3dc"/>
<circle cx="560.6" cy="406.7" r="0.9" fill="#4aa3dc"/>
<circle cx="558.2" cy="408.7" r="0.9" fill="#4aa3dc"/>
<polygon points="564.2,411.5 566.7,410.5 572.2,417 572.7,420 569.2,423 565.7,420.5 566.7,417" fill="#1c3040" stroke="#0c151c" stroke-width="0.6" stroke-linejoin="round" />
<circle cx="565.9" cy="412.9" r="0.9" fill="#4aa3dc"/>
<circle cx="570" cy="417.7" r="0.9" fill="#4aa3dc"/>
<circle cx="567.6" cy="419.7" r="0.9" fill="#4aa3dc"/>
<polygon points="570,678.1 619.8,639.2 655,679.8 604.1,718.8" fill="#000" opacity="0.4" filter="url(#sh)"/>
<polygon points="562,664.1 596.1,704.8 647,665.8 647.3,668.4 597.3,707.2 562.2,665.4" fill="#1c3040" stroke="#0a1118" stroke-width="0.84" stroke-linejoin="round" />
<polygon points="562,664.1 611.8,625.2 647,665.8 596.1,704.8" fill="#66ccff" stroke="#0a1118" stroke-width="0.96" stroke-linejoin="round" />
<polygon points="591,690.1 632.3,659.4 637,663.9 594.8,697.1" fill="#1c3040" stroke="#0a1118" stroke-width="0.84" stroke-linejoin="round" />
<polygon points="563.2,658.2 605.4,625.2 632.3,659.4 591,690.1" fill="#66ccff" stroke="#0a1118" stroke-width="0.96" stroke-linejoin="round" />
<polygon points="590.5,686.3 628.9,657.7 632.3,659.4 591,690.1" fill="#4ea4d8" stroke="#0a1118" stroke-width="0.6" stroke-linejoin="round" />
<polygon points="605.4,625.2 607.6,624.7 633.6,657.7 632.3,659.4" fill="#4ea4d8" stroke="#0a1118" stroke-width="0.6" stroke-linejoin="round" />
<polyline points="566.7,657.7 590.5,686.3" fill="none" stroke="#0a1118" stroke-width="0.6" stroke-linejoin="round" />
<polyline points="566.7,657.7 605,627.7 628.9,657.7" fill="none" stroke="#0a1118" stroke-width="0.6" stroke-linejoin="round" />
<polygon points="739.2,555.5 754.1,540.6 795.5,583.2 784.8,601.5" fill="#000" opacity="0.35" filter="url(#sh)"/>
<polygon points="740,525.5 748.1,521 789.5,563.8 780.1,568.8" fill="#7f8384" stroke="#0a1118" stroke-width="0.84" stroke-linejoin="round" />
<polygon points="780.1,568.8 789.5,563.8 788.6,582.2 779.7,587.5" fill="#2a2b2c" stroke="#0a1118" stroke-width="0.84" stroke-linejoin="round" />
<polygon points="780.1,572.3 789.2,567.7 789.2,570.2 780.1,574.9" fill="#151616" />
<polygon points="734.1,523.9 736.2,522.5 740,525.5 780.1,568.8 778.8,591.8 776.3,591.3 732.8,545.9" fill="#2e3031" stroke="#0a1118" stroke-width="0.96" stroke-linejoin="round" />
<polygon points="740.9,535.7 771.2,564.7 770.3,569.8 740.5,540.8" fill="#3c3e3f" stroke="#0a1118" stroke-width="0.6" stroke-linejoin="round" />
<polygon points="741.7,542.9 769.9,565.1 769,578.7 741.3,555.3" fill="#101111" stroke="#0a1118" stroke-width="0.6" stroke-linejoin="round" />
<polygon points="735.8,541.7 739.6,543.4 739.4,547.2 735.8,545.5" fill="#222324" stroke="#0a1118" stroke-width="0.6" stroke-linejoin="round" />
<polygon points="770.3,572.3 775.4,575.8 775,581.7 770.3,578.3" fill="#3c3e3f" stroke="#0a1118" stroke-width="0.6" stroke-linejoin="round" />
<polygon points="771.6,580 773.9,578.3 773.9,581.7" fill="#9a9c9c" />
<polygon points="814.1,573.3 833.7,563.9 838,574.2 819.2,582.7" fill="#000" opacity="0.22" filter="url(#sh2)"/>
<polygon points="786.7,547.6 799.9,540 802.9,547.6 789.7,551.9" fill="#000" opacity="0.18" filter="url(#sh2)"/>
<polygon points="776.9,521.6 787.3,516.5 789.5,522.1 779.7,525.9 777.5,524.2" fill="#3c3c3c" stroke="#0a1118" stroke-width="0.72" stroke-linejoin="round" />
<polygon points="776.9,521.6 787.3,516.5 788.6,519.1 778.7,523.9" fill="#ececec" stroke="#0a1118" stroke-width="0.6" stroke-linejoin="round" />
<polygon points="786.5,515.2 789.1,514 792.9,517.8 792.5,521.6 789.7,522.7 788.2,519.1" fill="#3c3c3c" stroke="#0a1118" stroke-width="0.72" stroke-linejoin="round" />
<polygon points="786.5,515.2 789.1,514 792.6,517.8 790.1,519.1" fill="#ececec" stroke="#0a1118" stroke-width="0.6" stroke-linejoin="round" />
<polygon points="806.3,555.7 821,547.2 826.1,556.2 811.2,564.7 807.4,560.4" fill="#3c3c3c" stroke="#0a1118" stroke-width="0.72" stroke-linejoin="round" />
<polygon points="806.3,555.7 821,547.2 823.6,551.5 809.5,559.6" fill="#ececec" stroke="#0a1118" stroke-width="0.6" stroke-linejoin="round" />
<polygon points="806.3,555.7 809.5,559.6 810.4,563.8 807.1,560.2" fill="#c8c8c8" stroke="#0a1118" stroke-width="0.48" stroke-linejoin="round" />
<polygon points="820.6,545.8 824.4,544 830,549.3 829.5,556.2 826.1,558.7 825.7,552.7" fill="#3c3c3c" stroke="#0a1118" stroke-width="0.72" stroke-linejoin="round" />
<polygon points="820.6,545.8 824.4,544 829.8,549.3 825.7,551.5" fill="#ececec" stroke="#0a1118" stroke-width="0.6" stroke-linejoin="round" />
</g>
</svg>
<div class="abs" id="topblack"></div>
<div class="abs" id="titlebar"></div>
<div class="abs" id="toolbar"></div>
<div class="abs" id="title">SMC-777_002_open</div>
<svg class="abs" style="left:0;top:0" width="1928" height="100" viewBox="0 0 1928 100">
<defs><linearGradient id="lg" x1="0" y1="0" x2="1" y2="1"><stop offset="0" stop-color="#c9d6dc"/><stop offset="1" stop-color="#9cb3bf"/></linearGradient></defs>
<polygon points="1.9,12.5 18,12.3 10.6,15.2" fill="#9fd9f0"/>
<polygon points="1.9,12.5 10.6,15.2 10,24.9" fill="#1a9fd4"/>
<polygon points="10.6,15.2 18,12.3 10,24.9" fill="#0e6a8e"/>
<rect x="8.1" y="39.2" width="43.2" height="43.2" rx="7.5" fill="url(#lg)"/>
<clipPath id="lgc"><rect x="8.1" y="39.2" width="43.2" height="43.2" rx="7.5"/></clipPath>
<polygon clip-path="url(#lgc)" points="46.7,49.2 52,55 52,83 36,83 29.9,76" fill="#6b9cb3"/>
<polygon points="13.1,50.4 46.7,49.2 29.9,56.6" fill="#b9e2f4"/>
<polygon points="13.1,50.4 29.9,56.6 29.9,76" fill="#1a9ed3"/>
<polygon points="29.9,56.6 46.7,49.2 29.9,76" fill="#0f6d94"/>
<text x="64.4" y="58.6" font-family="Liberation Sans,sans-serif" font-size="15.2" fill="#505050" textLength="67.8" lengthAdjust="spacingAndGlyphs" stroke="#f0f0f0" stroke-width="0.28">AUTODESK</text>
<circle cx="133.9" cy="49.2" r="0.85" fill="#5a5a5a"/>
<text x="64.2" y="73.6" font-family="Liberation Sans,sans-serif" font-size="14.2" font-weight="bold" fill="#4d4d4d" textLength="95" lengthAdjust="spacingAndGlyphs">123D  DESIGN</text>
<circle cx="102.2" cy="64.9" r="0.85" fill="#4d4d4d"/>
<polyline points="199.5,62.6 205.1,66.6 210.7,62.6" fill="none" stroke="#222" stroke-width="2" stroke-linecap="round" stroke-linejoin="round"/>
<line x1="1799.5" y1="18.5" x2="1809.5" y2="18.5" stroke="#222" stroke-width="1.1"/>
<rect x="1844.5" y="15.7" width="7.6" height="7.6" fill="#fff" stroke="#222" stroke-width="1.1"/>
<path d="M1846.6 15.6v-2.1h7.6v7.6h-2" fill="none" stroke="#222" stroke-width="1.1"/>
<path d="M1890.3 13.6l9.6 9.6M1899.9 13.6l-9.6 9.6" fill="none" stroke="#222" stroke-width="1.2"/>
<polygon points="614.8,58 624.3,52.7 624.3,63.2" fill="#222"/>
<path d="M623.5 58 C630 57.2 634 58.6 635.6 62.4" fill="none" stroke="#222" stroke-width="2.3"/>
<polygon points="677.9,58 668.9,52.7 668.9,63.2" fill="#b9b9b9"/>
<path d="M669.6 58 C663 57.2 659.4 58.6 657.7 62.4" fill="none" stroke="#b9b9b9" stroke-width="2.3"/>
<defs><linearGradient id="sg710" x1="0" y1="0" x2="0" y2="1"><stop offset="0" stop-color="#888" stop-opacity="0"/><stop offset="0.5" stop-color="#777"/><stop offset="1" stop-color="#888" stop-opacity="0"/></linearGradient></defs><rect x="710" y="46" width="1" height="26" fill="url(#sg710)"/>
<defs><linearGradient id="sg796" x1="0" y1="0" x2="0" y2="1"><stop offset="0" stop-color="#888" stop-opacity="0"/><stop offset="0.5" stop-color="#777"/><stop offset="1" stop-color="#888" stop-opacity="0"/></linearGradient></defs><rect x="795.9" y="46" width="1" height="26" fill="url(#sg796)"/>
<defs><linearGradient id="sg1269" x1="0" y1="0" x2="0" y2="1"><stop offset="0" stop-color="#888" stop-opacity="0"/><stop offset="0.5" stop-color="#777"/><stop offset="1" stop-color="#888" stop-opacity="0"/></linearGradient></defs><rect x="1269.1" y="46" width="1" height="26" fill="url(#sg1269)"/>
<rect x="744.4" y="49.6" width="20.4" height="20" fill="none" stroke="#222" stroke-width="1.1" stroke-dasharray="1.1 1.3"/>
<rect x="756" y="45" width="11" height="10" fill="#f0f0f0"/>
<polygon points="747.66,57.9 753.4,61.2 753.4,67.8 747.66,64.5" fill="#666"/><polygon points="753.4,61.2 759.14,57.9 759.14,64.5 753.4,67.8" fill="#2b2b2b"/><polygon points="753.4,54.6 759.14,57.9 753.4,61.2 747.66,57.9" fill="#f4f4f4" stroke="#2b2b2b" stroke-width="0.9" stroke-linejoin="round"/>
<path d="M761.6 45.8v9M757.1 50.3h9" stroke="#222" stroke-width="1" fill="none"/>
<polygon points="761.6,45 760,47.2 763.2,47.2" fill="#222"/><polygon points="761.6,55.6 760,53.4 763.2,53.4" fill="#222"/><polygon points="756.3,50.3 758.5,48.7 758.5,51.9" fill="#222"/><polygon points="766.9,50.3 764.7,48.7 764.7,51.9" fill="#222"/>
<circle cx="844.4" cy="54.6" r="6.9" fill="#f4f4f4" stroke="#2b2b2b" stroke-width="0.9"/>
<polygon points="828.8,56.3 836.8,60.9 836.8,70.1 828.8,65.5" fill="#666"/><polygon points="836.8,60.9 844.8,56.3 844.8,65.5 836.8,70.1" fill="#2b2b2b"/><polygon points="836.8,51.7 844.8,56.3 836.8,60.9 828.8,56.3" fill="#f4f4f4" stroke="#2b2b2b" stroke-width="0.9" stroke-linejoin="round"/>
<path d="M883.5 50.8 C873 49 870 58 876 63 C878 65.5 880 66 881.5 66.5" fill="none" stroke="#2b2b2b" stroke-width="1"/>
<circle cx="882.9" cy="52.8" r="2.1" fill="#2b2b2b"/><circle cx="876" cy="62.8" r="2.1" fill="#2b2b2b"/>
<polygon points="892.3,48 896.2,51.2 888.3,61.2 884.4,58" fill="#2b2b2b"/>
<polygon points="883.6,59.2 887.3,62.2 881.2,66.6" fill="#2b2b2b"/>
<polygon points="917.9,56.4 925.9,61 925.9,70.2 917.9,65.6" fill="#666"/><polygon points="925.9,61 933.9,56.4 933.9,65.6 925.9,70.2" fill="#2b2b2b"/><polygon points="925.9,51.8 933.9,56.4 925.9,61 917.9,56.4" fill="#f4f4f4" stroke="#2b2b2b" stroke-width="0.9" stroke-linejoin="round"/>
<polygon points="933,46.2 935.4,47.6 930.6,55.2 928.2,53.8" fill="#2b2b2b"/>
<polygon points="927.8,54.6 930,56 926.6,57.8" fill="#2b2b2b"/>
<polygon points="957.7,56.4 965.7,61 965.7,70.2 957.7,65.6" fill="#666"/><polygon points="965.7,61 973.7,56.4 973.7,65.6 965.7,70.2" fill="#2b2b2b"/><polygon points="965.7,51.8 973.7,56.4 965.7,61 957.7,56.4" fill="#f4f4f4" stroke="#2b2b2b" stroke-width="0.9" stroke-linejoin="round"/>
<path d="M974.6 47.5v8h8" fill="none" stroke="#2b2b2b" stroke-width="1.1"/>
<polygon points="974.6,46 972.8,49 976.4,49" fill="#2b2b2b"/><polygon points="984,55.5 981,53.7 981,57.3" fill="#2b2b2b"/>
<polygon points="1002.9,51.7 1006.9,54 1006.9,58.6 1002.9,56.3" fill="#666"/><polygon points="1006.9,54 1010.9,51.7 1010.9,56.3 1006.9,58.6" fill="#2b2b2b"/><polygon points="1006.9,49.4 1010.9,51.7 1006.9,54 1002.9,51.7" fill="#f4f4f4" stroke="#2b2b2b" stroke-width="0.7" stroke-linejoin="round"/>
<polygon points="1013,51.7 1017,54 1017,58.6 1013,56.3" fill="#666"/><polygon points="1017,54 1021,51.7 1021,56.3 1017,58.6" fill="#2b2b2b"/><polygon points="1017,49.4 1021,51.7 1017,54 1013,51.7" fill="#f4f4f4" stroke="#2b2b2b" stroke-width="0.7" stroke-linejoin="round"/>
<polygon points="1002.9,61.7 1006.9,64 1006.9,68.6 1002.9,66.3" fill="#666"/><polygon points="1006.9,64 1010.9,61.7 1010.9,66.3 1006.9,68.6" fill="#2b2b2b"/><polygon points="1006.9,59.4 1010.9,61.7 1006.9,64 1002.9,61.7" fill="#f4f4f4" stroke="#2b2b2b" stroke-width="0.7" stroke-linejoin="round"/>
<polygon points="1013,61.7 1017,64 1017,68.6 1013,66.3" fill="#666"/><polygon points="1017,64 1021,61.7 1021,66.3 1017,68.6" fill="#2b2b2b"/><polygon points="1017,59.4 1021,61.7 1017,64 1013,61.7" fill="#f4f4f4" stroke="#2b2b2b" stroke-width="0.7" stroke-linejoin="round"/>
<circle cx="1059" cy="56.8" r="5.9" fill="#f4f4f4" stroke="#2b2b2b" stroke-width="0.9"/>
<polygon points="1047.05,59.95 1052.7,63.2 1052.7,69.7 1047.05,66.45" fill="#666"/><polygon points="1052.7,63.2 1058.36,59.95 1058.36,66.45 1052.7,69.7" fill="#2b2b2b"/><polygon points="1052.7,56.7 1058.36,59.95 1052.7,63.2 1047.05,59.95" fill="#f4f4f4" stroke="#2b2b2b" stroke-width="0.9" stroke-linejoin="round"/>
<rect x="1044.8" y="48.9" width="2" height="2" fill="#2b2b2b"/>
<rect x="1065" y="48.9" width="2" height="2" fill="#2b2b2b"/>
<rect x="1044.8" y="69" width="2" height="2" fill="#2b2b2b"/>
<rect x="1065" y="69" width="2" height="2" fill="#2b2b2b"/>
<polygon points="1090.55,55.2 1098.9,60 1098.9,69.6 1090.55,64.8" fill="#666"/><polygon points="1098.9,60 1107.25,55.2 1107.25,64.8 1098.9,69.6" fill="#2b2b2b"/><polygon points="1098.9,50.4 1107.25,55.2 1098.9,60 1090.55,55.2" fill="#f4f4f4" stroke="#2b2b2b" stroke-width="0.9" stroke-linejoin="round"/>
<polygon points="1098.9,50.4 1101.6,49.3 1109.4,54 1109.4,64 1105,66.3 1105,55.4" fill="#555" stroke="#2b2b2b" stroke-width="0.7" stroke-linejoin="round"/>
<polygon points="1098.9,50.4 1101.6,49.3 1109.4,54 1105,55.9" fill="#f4f4f4" stroke="#2b2b2b" stroke-width="0.7" stroke-linejoin="round"/>
<polygon points="1130.85,54.5 1139.2,59.3 1139.2,68.9 1130.85,64.1" fill="#666"/><polygon points="1139.2,59.3 1147.55,54.5 1147.55,64.1 1139.2,68.9" fill="#2b2b2b"/><polygon points="1139.2,49.7 1147.55,54.5 1139.2,59.3 1130.85,54.5" fill="#f4f4f4" stroke="#2b2b2b" stroke-width="0.9" stroke-linejoin="round"/>
<rect x="1146.4" y="49.6" width="5.2" height="19.8" fill="#f4f4f4" stroke="#222" stroke-width="1.1"/>
<line x1="1146.4" y1="52" x2="1149.2" y2="52" stroke="#222" stroke-width="0.7"/>
<line x1="1146.4" y1="54.5" x2="1148.2" y2="54.5" stroke="#222" stroke-width="0.7"/>
<line x1="1146.4" y1="57" x2="1149.2" y2="57" stroke="#222" stroke-width="0.7"/>
<line x1="1146.4" y1="59.5" x2="1148.2" y2="59.5" stroke="#222" stroke-width="0.7"/>
<line x1="1146.4" y1="62" x2="1149.2" y2="62" stroke="#222" stroke-width="0.7"/>
<line x1="1146.4" y1="64.5" x2="1148.2" y2="64.5" stroke="#222" stroke-width="0.7"/>
<line x1="1146.4" y1="67" x2="1149.2" y2="67" stroke="#222" stroke-width="0.7"/>
<path d="M1175 50.6h18v4.6h-6.1v14.8h-5.8V55.2H1175z" fill="#2b2b2b"/>
<g transform="translate(1228,58.4) rotate(46) scale(1.13)"><path d="M-6.6 8.5V-1.5a6.6 6.6 0 0 1 13.2 0V8.5h-4.1V-1.5a2.5 2.5 0 0 0 -5 0V8.5z" fill="#f0f0f0" stroke="#333" stroke-width="1"/><rect x="-6.6" y="5" width="4.1" height="3.6" fill="#2b2b2b"/><rect x="2.5" y="5" width="4.1" height="3.6" fill="#2b2b2b"/></g>
<clipPath id="mc"><polygon points="1302.99,53.1 1313.6,59.2 1324.21,53.1 1324.21,65.3 1313.6,71.4 1302.99,65.3"/></clipPath>
<g clip-path="url(#mc)"><rect x="1302.99" y="47" width="21.23" height="24.4" fill="#f4f4f4"/><line x1="1302.99" y1="54.3" x2="1313.6" y2="60.4" stroke="#2b2b2b" stroke-width="1.25"/><line x1="1302.99" y1="56.6" x2="1313.6" y2="62.7" stroke="#2b2b2b" stroke-width="1.25"/><line x1="1302.99" y1="58.9" x2="1313.6" y2="65" stroke="#2b2b2b" stroke-width="1.25"/><line x1="1302.99" y1="61.2" x2="1313.6" y2="67.3" stroke="#2b2b2b" stroke-width="1.25"/><line x1="1302.99" y1="63.5" x2="1313.6" y2="69.6" stroke="#2b2b2b" stroke-width="1.25"/><line x1="1302.99" y1="65.8" x2="1313.6" y2="71.9" stroke="#2b2b2b" stroke-width="1.25"/><line x1="1302.99" y1="68.1" x2="1313.6" y2="74.2" stroke="#2b2b2b" stroke-width="1.25"/><line x1="1302.99" y1="70.4" x2="1313.6" y2="76.5" stroke="#2b2b2b" stroke-width="1.25"/><line x1="1306.6" y1="71.4" x2="1315.1" y2="55.54" stroke="#2b2b2b" stroke-width="1.25"/><line x1="1308.9" y1="71.4" x2="1317.4" y2="55.54" stroke="#2b2b2b" stroke-width="1.25"/><line x1="1311.2" y1="71.4" x2="1319.7" y2="55.54" stroke="#2b2b2b" stroke-width="1.25"/><line x1="1313.5" y1="71.4" x2="1322" y2="55.54" stroke="#2b2b2b" stroke-width="1.25"/><line x1="1315.8" y1="71.4" x2="1324.3" y2="55.54" stroke="#2b2b2b" stroke-width="1.25"/><line x1="1318.1" y1="71.4" x2="1326.6" y2="55.54" stroke="#2b2b2b" stroke-width="1.25"/><line x1="1320.4" y1="71.4" x2="1328.9" y2="55.54" stroke="#2b2b2b" stroke-width="1.25"/><line x1="1322.7" y1="71.4" x2="1331.2" y2="55.54" stroke="#2b2b2b" stroke-width="1.25"/><line x1="1325" y1="71.4" x2="1333.5" y2="55.54" stroke="#2b2b2b" stroke-width="1.25"/><line x1="1327.3" y1="71.4" x2="1335.8" y2="55.54" stroke="#2b2b2b" stroke-width="1.25"/></g>
<polygon points="1313.6,47 1324.21,53.1 1313.6,59.2 1302.99,53.1" fill="#f4f4f4" stroke="#2b2b2b" stroke-width="0.8" stroke-linejoin="round"/>
<polygon points="775.3,79.2 775.3,82.8 771.7,82.8" fill="#8a8a8a"/>
<polygon points="861.3,79.2 861.3,82.8 857.7,82.8" fill="#8a8a8a"/>
<polygon points="904.4,79.2 904.4,82.8 900.8,82.8" fill="#8a8a8a"/>
<polygon points="947.2,79.2 947.2,82.8 943.6,82.8" fill="#8a8a8a"/>
<polygon points="990.3,79.2 990.3,82.8 986.7,82.8" fill="#8a8a8a"/>
<polygon points="1033.2,79.2 1033.2,82.8 1029.6,82.8" fill="#8a8a8a"/>
<polygon points="1076.3,79.2 1076.3,82.8 1072.7,82.8" fill="#8a8a8a"/>
<polygon points="1119.3,79.2 1119.3,82.8 1115.7,82.8" fill="#8a8a8a"/>
</svg>
<div class="abs btn" id="prem"><div class="l1">プレミアム版登録</div><div class="l2">(商業利用向け)</div></div>
<div class="abs btn" id="signin">サインイン</div>
<div class="abs" id="help">?</div>
<div class="abs" id="vscroll"></div>
<div class="abs" id="vthumb"></div>
<svg class="abs" style="left:1912px;top:580px" width="8" height="16" viewBox="0 0 8 16"><polygon points="1,8 6.5,3 6.5,13" fill="#fff"/></svg>
<div class="abs" id="rightblue"></div>
<div class="abs" id="rightwhite"></div>
<div class="abs" id="navbar"></div>
<svg class="abs" style="left:1800px;top:91px" width="112" height="520" viewBox="1800 91 112 520">
<defs><filter id="cb" x="-30%" y="-30%" width="160%" height="160%"><feGaussianBlur stdDeviation="5"/></filter><linearGradient id="cl" x1="0" y1="0" x2="0" y2="1"><stop offset="0" stop-color="#eaeaea"/><stop offset="1" stop-color="#d2d2d2"/></linearGradient><linearGradient id="cr" x1="0" y1="0" x2="0" y2="1"><stop offset="0" stop-color="#f1f1f1"/><stop offset="1" stop-color="#d6d6d6"/></linearGradient></defs>
<polygon points="1827.2,161.6 1853.8,186 1889.8,164 1880,178 1850,192 1832,176" fill="#000" opacity="0.22" filter="url(#cb)" transform="translate(0,8)"/>
<polygon points="1822.4,124.6 1853.8,150.4 1853.8,186 1827.2,161.6" fill="url(#cl)"/>
<polygon points="1853.8,150.4 1894.8,130.8 1889.8,164 1853.8,186" fill="url(#cr)"/>
<polygon points="1861.5,106.2 1894.8,130.8 1853.8,150.4 1822.4,124.6" fill="#f6f6f6"/>
<path d="M1822.4,124.6 L1861.5,106.2 L1894.8,130.8 L1889.8,164 L1853.8,186 L1827.2,161.6Z M1822.4,124.6 L1853.8,150.4 L1894.8,130.8 M1853.8,150.4 L1853.8,186" fill="none" stroke="#9a9a9a" stroke-width="0.7" stroke-dasharray="3 1.2" stroke-linejoin="round"/>
<polygon points="1846.8,147.4 1855.2,143 1861.6,149.2 1860.6,156.6 1853,160.2 1847.8,155" fill="#a9dcf2"/>
<text transform="matrix(1.04,-0.45,0.63,0.64,1861.5,129.6)" x="0" y="0" text-anchor="middle" dominant-baseline="central" font-weight="500" font-size="21" font-family="Liberation Sans,Noto Sans CJK JP,sans-serif" fill="#111">上</text>
<text transform="matrix(0.74,0.6,0,1.1,1839.4,157)" x="0" y="0" text-anchor="middle" dominant-baseline="central" font-weight="500" font-size="20" font-family="Liberation Sans,Noto Sans CJK JP,sans-serif" fill="#111">左</text>
<text transform="matrix(0.9,-0.43,0,1.0,1872.6,158.9)" x="0" y="0" text-anchor="middle" dominant-baseline="central" font-weight="500" font-size="23" font-family="Liberation Sans,Noto Sans CJK JP,sans-serif" fill="#111">前</text>
<path d="M1871.2 222.5v18M1862.2 231.5h18" stroke="#2b2b2b" stroke-width="1.1" fill="none"/>
<polygon points="1871.2,221 1868.8,224.6 1873.6,224.6" fill="#2b2b2b"/>
<polygon points="1871.2,242 1868.8,238.4 1873.6,238.4" fill="#2b2b2b"/>
<polygon points="1860.7,231.5 1864.3,229.1 1864.3,233.9" fill="#2b2b2b"/>
<polygon points="1881.7,231.5 1878.1,229.1 1878.1,233.9" fill="#2b2b2b"/>
<polygon points="1865.81,263.1 1871.2,266.2 1871.2,272.4 1865.81,269.3" fill="#666"/><polygon points="1871.2,266.2 1876.59,263.1 1876.59,269.3 1871.2,272.4" fill="#2b2b2b"/><polygon points="1871.2,260 1876.59,263.1 1871.2,266.2 1865.81,263.1" fill="#f4f4f4" stroke="#2b2b2b" stroke-width="0.9" stroke-linejoin="round"/>
<path d="M1865.2 257.7A10 10 0 0 0 1863.7 273.2" fill="none" stroke="#2b2b2b" stroke-width="1.1"/>
<path d="M1877.2 274.7A10 10 0 0 0 1878.7 259.2" fill="none" stroke="#2b2b2b" stroke-width="1.1"/>
<polygon points="1867.2,255.7 1863.7,259.7 1862.7,255.7" fill="#2b2b2b"/>
<polygon points="1875.2,276.7 1878.7,272.7 1879.7,276.7" fill="#2b2b2b"/>
<circle cx="1869.6000000000001" cy="298.7" r="6.4" fill="#fafafa" stroke="#2b2b2b" stroke-width="1.2"/>
<line x1="1874.4" y1="303.7" x2="1879.2" y2="308.5" stroke="#2b2b2b" stroke-width="3" stroke-linecap="round"/>
<defs><linearGradient id="hs" x1="0" y1="0" x2="1" y2="0"><stop offset="0" stop-color="#888" stop-opacity="0"/><stop offset="0.5" stop-color="#777"/><stop offset="1" stop-color="#888" stop-opacity="0"/></linearGradient></defs>
<rect x="1858" y="321.7" width="26" height="1" fill="url(#hs)"/><rect x="1858" y="506" width="26" height="1" fill="url(#hs)"/>
<polygon points="1865.81,342.1 1871.2,345.2 1871.2,351.4 1865.81,348.3" fill="#666"/><polygon points="1871.2,345.2 1876.59,342.1 1876.59,348.3 1871.2,351.4" fill="#2b2b2b"/><polygon points="1871.2,339 1876.59,342.1 1871.2,345.2 1865.81,342.1" fill="#f4f4f4" stroke="#2b2b2b" stroke-width="0.9" stroke-linejoin="round"/>
<path d="M1861.2 338.6V335.2H1864.6" fill="none" stroke="#2b2b2b" stroke-width="1.1"/>
<path d="M1881.2 338.6V335.2H1877.8" fill="none" stroke="#2b2b2b" stroke-width="1.1"/>
<path d="M1861.2 351.8V355.2H1864.6" fill="none" stroke="#2b2b2b" stroke-width="1.1"/>
<path d="M1881.2 351.8V355.2H1877.8" fill="none" stroke="#2b2b2b" stroke-width="1.1"/>
<circle cx="1875.4" cy="377.6" r="6.3" fill="#fafafa" stroke="#2b2b2b" stroke-width="0.9"/>
<polygon points="1862.21,378.7 1869,382.6 1869,390.4 1862.21,386.5" fill="#2b2b2b"/><polygon points="1869,382.6 1875.79,378.7 1875.79,386.5 1869,390.4" fill="#555"/><polygon points="1869,374.8 1875.79,378.7 1869,382.6 1862.21,378.7" fill="#777" stroke="#2b2b2b" stroke-width="0.9" stroke-linejoin="round"/>
<path d="M1861.2 414.8Q1871.2 403.8 1881.2 414.8Q1871.2 425.8 1861.2 414.8Z" fill="#fafafa" stroke="#2b2b2b" stroke-width="1.2"/>
<circle cx="1871.2" cy="414.8" r="3.6" fill="#555"/>
<path d="M1863.2 446.5h13l3.5 14h-19zM1862.0 451.0h16.5M1861.2 455.5h18.6M1867.5 446.5l-1.2 14M1872.0 446.5l1.2 14" fill="none" stroke="#2b2b2b" stroke-width="1"/>
<path d="M1866.7 446.1Q1874.2 438.5 1881.7 446.1Q1874.2 453.7 1866.7 446.1Z" fill="#fafafa" stroke="#2b2b2b" stroke-width="1.1"/>
<circle cx="1874.2" cy="446.1" r="2.7" fill="#555"/>
<path d="M1861.2 479.9h5.2l1.6-3h6.4l1.6 3h5.2v14.5h-20z" fill="#333"/>
<circle cx="1871.2" cy="487.0" r="4.2" fill="none" stroke="#fafafa" stroke-width="1.6"/>
<rect x="1877.2" y="481.79999999999995" width="2" height="1.6" fill="#fafafa"/>
<g transform="translate(1876.2,523.9) rotate(38)"><path d="M-4.6 6V-1a4.6 4.6 0 0 1 9.2 0V6h-2.9V-1a1.7 1.7 0 0 0 -3.4 0V6z" fill="#fafafa" stroke="#333" stroke-width="0.9"/><rect x="-4.6" y="3.6" width="2.9" height="2.4" fill="#2b2b2b"/><rect x="1.7" y="3.6" width="2.9" height="2.4" fill="#2b2b2b"/></g>
<polygon points="1861.73,529.6 1866.6,532.4 1866.6,538 1861.73,535.2" fill="#666"/><polygon points="1866.6,532.4 1871.47,529.6 1871.47,535.2 1866.6,538" fill="#2b2b2b"/><polygon points="1866.6,526.8 1871.47,529.6 1866.6,532.4 1861.73,529.6" fill="#f4f4f4" stroke="#2b2b2b" stroke-width="0.9" stroke-linejoin="round"/>
<polygon points="1870.53,529.8 1875.4,532.6 1875.4,538.2 1870.53,535.4" fill="#666"/><polygon points="1875.4,532.6 1880.27,529.8 1880.27,535.4 1875.4,538.2" fill="#2b2b2b"/><polygon points="1875.4,527 1880.27,529.8 1875.4,532.6 1870.53,529.8" fill="#f4f4f4" stroke="#2b2b2b" stroke-width="0.9" stroke-linejoin="round"/>
<polygon points="1861.7,535.2 1871,540.9 1880.2,535.4 1880.2,530.4 1871,535.6 1861.7,530" fill="#2b2b2b" opacity="0.0"/>
<rect x="1859.9" y="520.1" width="1.6" height="1.6" fill="#2b2b2b"/>
<rect x="1859.9" y="539.1" width="1.6" height="1.6" fill="#2b2b2b"/>
<rect x="1880.9" y="539.1" width="1.6" height="1.6" fill="#2b2b2b"/>
<g transform="translate(1873.2,571.1) rotate(38)"><path d="M-6 8V-1.5a6 6 0 0 1 12 0V8h-3.6V-1.5a2.4 2.4 0 0 0 -4.8 0V8z" fill="#fafafa" stroke="#333" stroke-width="1"/><rect x="-6" y="5" width="3.6" height="3" fill="#2b2b2b"/><rect x="2.4" y="5" width="3.6" height="3" fill="#2b2b2b"/></g>
<polygon points="1859.42,563 1862.2,564.6 1862.2,567.8 1859.42,566.2" fill="#666"/><polygon points="1862.2,564.6 1864.98,563 1864.98,566.2 1862.2,567.8" fill="#2b2b2b"/><polygon points="1862.2,561.4 1864.98,563 1862.2,564.6 1859.42,563" fill="#f4f4f4" stroke="#2b2b2b" stroke-width="0.6" stroke-linejoin="round"/>
<path d="M1861.2 568.6Q1861.2 579.6 1872.2 581.1H1880.2" fill="none" stroke="#2b2b2b" stroke-width="1.2" stroke-dasharray="1.4 1.1"/>
<line x1="1861.2" y1="581.6" x2="1881.2" y2="560.6" stroke="#2b2b2b" stroke-width="1.5"/>
</svg>
<div class="abs" id="gridedit">グリッドを編集</div>
<div class="abs snap" style="left:1741px">1</div>
<div class="abs snap" style="left:1821px">1</div>
<div class="abs snaplab" style="left:1741px">長さスナップ</div>
<div class="abs snaplab" style="left:1821px">角度スナップ</div>
<div class="abs" id="bottom"></div><div class="abs" id="bottom2"></div>
<div class="abs" id="bottombox"></div>
<div class="abs" id="bottomtab"></div>
</body></html>
